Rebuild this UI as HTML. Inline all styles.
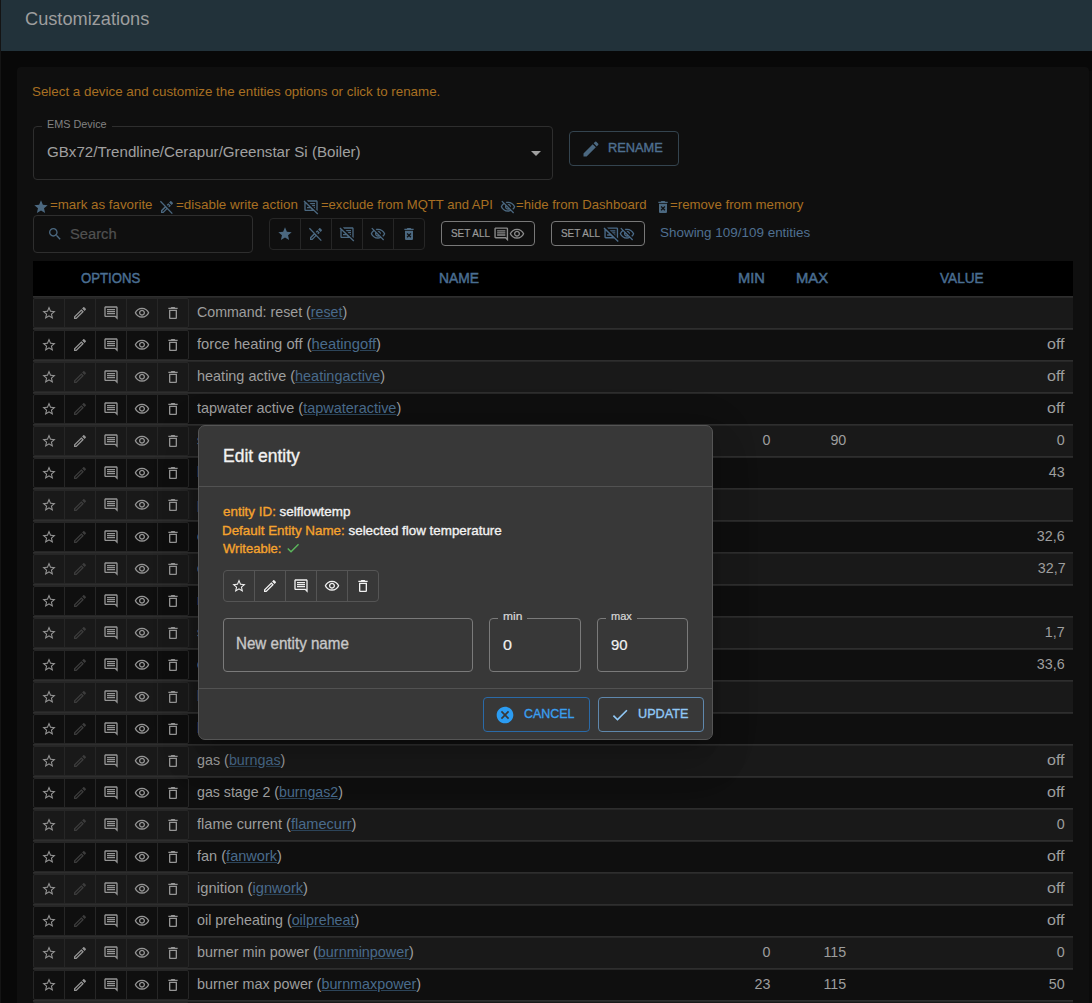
<!DOCTYPE html>
<html><head><meta charset="utf-8"><style>
*{box-sizing:border-box;margin:0;padding:0}
html,body{width:1092px;height:1003px;overflow:hidden;background:#080808;font-family:"Liberation Sans",sans-serif;}
.a{position:absolute}
.ic{position:absolute;display:block}
.t{position:absolute;white-space:nowrap;line-height:1}
</style></head><body>
<div class="a" style="left:0;top:0;width:1px;height:1003px;background:#141414"></div>
<div class="a" style="left:1px;top:0;width:1091px;height:51px;background:#22323a"></div>
<div class="a" style="left:17px;top:67px;width:1072px;height:1000px;background:#0f0f0f;border-radius:4px"></div>
<div class="a" style="left:1089px;top:71px;width:3px;height:932px;background:#0b0b0b"></div>

<div class="t" style="left:24.72px;top:10.00px;font-size:18.6px;color:#9e9e9e;font-weight:normal;transform:scaleX(0.9778);transform-origin:0 0;">Customizations</div>
<div class="t" style="left:32.17px;top:85.00px;font-size:13.0px;color:#a86f22;font-weight:normal;transform:scaleX(1.0273);transform-origin:0 0;">Select a device and customize the entities options or click to rename.</div>
<div class="a" style="left:33px;top:126px;width:520px;height:54px;border:1px solid #2e2e2e;border-radius:4px"></div>
<div class="a" style="left:42px;top:120px;width:70px;height:12px;background:#0f0f0f"></div>
<div class="t" style="left:46.96px;top:119.00px;font-size:11.5px;color:#828282;font-weight:normal;transform:scaleX(0.9419);transform-origin:0 0;">EMS Device</div>
<div class="t" style="left:47.30px;top:144.00px;font-size:15.5px;color:#a0a0a0;font-weight:normal;transform:scaleX(0.9751);transform-origin:0 0;">GBx72/Trendline/Cerapur/Greenstar Si (Boiler)</div>
<svg class="ic" style="left:523.6px;top:141px;width:24px;height:24px;" viewBox="0 0 24 24"><path fill="#a0a0a0" d="M7 10l5 5 5-5z"/></svg>
<div class="a" style="left:569px;top:131px;width:110px;height:35px;border:1px solid #34444f;border-radius:4px"></div>
<svg class="ic" style="left:580.6px;top:138.7px;width:20px;height:20px;" viewBox="0 0 24 24"><path fill="#4b6880" d="M3 17.25V21h3.75L17.81 9.94l-3.75-3.75L3 17.25zM20.71 7.04c.39-.39.39-1.02 0-1.41l-2.34-2.34a.9959.9959 0 0 0-1.41 0l-1.83 1.83 3.75 3.75 1.83-1.83z"/></svg>
<div class="t" style="left:608.43px;top:142.00px;font-size:12.0px;color:#4f7091;font-weight:normal;transform:scaleX(1.0660);transform-origin:0 0;-webkit-text-stroke:0.35px currentColor;">RENAME</div>
<svg class="ic" style="left:32.8px;top:198.5px;width:16px;height:16px;" viewBox="0 0 24 24"><path fill="#4b6880" d="M12 17.27 18.18 21l-1.64-7.03L22 9.24l-7.19-.61L12 2 9.19 8.63 2 9.24l5.46 4.73L5.82 21z"/></svg>
<div class="t" style="left:49.90px;top:199.00px;font-size:12.4px;color:#a86f22;font-weight:normal;transform:scaleX(1.0747);transform-origin:0 0;">=mark as favorite</div>
<svg class="ic" style="left:158.5px;top:198.5px;width:16px;height:16px;" viewBox="0 0 24 24"><path fill="#4b6880" d="M14.06 9.02l.92.92-1.11 1.11 1.41 1.41 2.52-2.52-3.75-3.75-2.52 2.52 1.41 1.41 1.12-1.1zm6.65-1.98c.39-.39.39-1.02 0-1.41l-2.34-2.34c-.2-.2-.45-.29-.71-.29-.26 0-.51.1-.7.29l-1.83 1.83 3.75 3.75 1.83-1.83zM2.81 2.81 1.39 4.22 8.46 11.3 3 16.75V21h3.75l5.46-5.46 7.07 7.07 1.41-1.41L2.81 2.81zM5.92 19H5v-.92l4.88-4.88.92.92L5.92 19z"/></svg>
<div class="t" style="left:175.80px;top:199.00px;font-size:12.4px;color:#a86f22;font-weight:normal;transform:scaleX(1.0821);transform-origin:0 0;">=disable write action</div>
<svg class="ic" style="left:303.3px;top:198.5px;width:16px;height:16px;" viewBox="0 0 24 24"><path fill="#4b6880" d="M21.99 4c0-1.1-.89-2-1.99-2H5.83l2 2H20v12.17l-.01.01L17.83 14H18v-2h-2.17l-1-1H18V9h-5.17l-1-1H18V6H9.83L20.99 17.17l1 1zM2.1 2.1.69 3.51 2 4.83V16c0 1.1.9 2 2 2h12.17l5.31 5.31 1.41-1.41L2.1 2.1zM4 16V6.83L9.17 12H6v2h5.17l2 2H4z"/></svg>
<div class="t" style="left:320.50px;top:199.00px;font-size:12.4px;color:#a86f22;font-weight:normal;transform:scaleX(1.0521);transform-origin:0 0;">=exclude from MQTT and API</div>
<svg class="ic" style="left:499.5px;top:198.5px;width:16px;height:16px;" viewBox="0 0 24 24"><path fill="#4b6880" d="M12 6c3.79 0 7.17 2.13 8.82 5.5-.59 1.22-1.42 2.27-2.41 3.12l1.41 1.41c1.39-1.23 2.49-2.77 3.18-4.53C21.27 7.11 17 4 12 4c-1.27 0-2.49.2-3.64.57l1.65 1.65C10.66 6.09 11.32 6 12 6zm-1.07 1.14L13 9.21c.57.25 1.03.71 1.28 1.28l2.07 2.07c.08-.34.14-.7.14-1.07C16.5 9.01 14.48 7 12 7c-.37 0-.72.05-1.07.14zM2.01 3.87l2.68 2.68C3.06 7.83 1.77 9.53 1 11.5 2.73 15.89 7 19 12 19c1.52 0 2.98-.29 4.32-.82l3.42 3.42 1.41-1.41L3.42 2.45 2.01 3.87zm7.5 7.5 2.61 2.61c-.04.01-.08.02-.12.02-1.38 0-2.5-1.12-2.5-2.5 0-.05.01-.08.01-.13zm-3.4-3.4 1.75 1.75c-.23.55-.36 1.15-.36 1.78 0 2.48 2.02 4.5 4.5 4.5.63 0 1.23-.13 1.77-.36l.98.98c-.88.24-1.8.38-2.75.38-3.79 0-7.17-2.13-8.82-5.5.7-1.43 1.72-2.61 2.93-3.53z"/></svg>
<div class="t" style="left:515.50px;top:199.00px;font-size:12.4px;color:#a86f22;font-weight:normal;transform:scaleX(1.0618);transform-origin:0 0;">=hide from Dashboard</div>
<svg class="ic" style="left:654.5px;top:198.5px;width:16px;height:16px;" viewBox="0 0 24 24"><path fill="#4b6880" d="M6 19c0 1.1.9 2 2 2h8c1.1 0 2-.9 2-2V7H6v12zm2.46-7.12 1.41-1.41L12 12.59l2.12-2.12 1.41 1.41L13.41 14l2.12 2.12-1.41 1.41L12 15.41l-2.12 2.12-1.41-1.41L10.59 14l-2.13-2.12zM15.5 4l-1-1h-5l-1 1H5v2h14V4z"/></svg>
<div class="t" style="left:670.10px;top:199.00px;font-size:12.4px;color:#a86f22;font-weight:normal;transform:scaleX(1.0672);transform-origin:0 0;">=remove from memory</div>
<div class="a" style="left:33px;top:215px;width:220px;height:38px;border:1px solid #2e2e2e;border-radius:4px"></div>
<svg class="ic" style="left:46.8px;top:225.8px;width:16px;height:16px;" viewBox="0 0 24 24"><path fill="#4b6880" d="M15.5 14h-.79l-.28-.27C15.41 12.59 16 11.11 16 9.5 16 5.91 13.09 3 9.5 3S3 5.91 3 9.5 5.91 16 9.5 16c1.61 0 3.09-.59 4.23-1.57l.27.28v.79l5 4.99L20.49 19l-4.99-5zm-6 0C7.01 14 5 11.99 5 9.5S7.01 5 9.5 5 14 7.01 14 9.5 11.99 14 9.5 14z"/></svg>
<div class="t" style="left:70.41px;top:227.00px;font-size:14.9px;color:#515151;font-weight:normal;transform:scaleX(0.9870);transform-origin:0 0;-webkit-text-stroke:0.2px currentColor;">Search</div>
<div class="a" style="left:269px;top:218px;width:156px;height:32px;border:1px solid #262626;border-radius:4px"></div>
<div class="a" style="left:300px;top:219px;width:1px;height:30px;background:#262626"></div>
<div class="a" style="left:331px;top:219px;width:1px;height:30px;background:#262626"></div>
<div class="a" style="left:362px;top:219px;width:1px;height:30px;background:#262626"></div>
<div class="a" style="left:393px;top:219px;width:1px;height:30px;background:#262626"></div>
<svg class="ic" style="left:276.5px;top:226px;width:16px;height:16px;" viewBox="0 0 24 24"><path fill="#4b6880" d="M12 17.27 18.18 21l-1.64-7.03L22 9.24l-7.19-.61L12 2 9.19 8.63 2 9.24l5.46 4.73L5.82 21z"/></svg>
<svg class="ic" style="left:307.5px;top:226px;width:16px;height:16px;" viewBox="0 0 24 24"><path fill="#4b6880" d="M14.06 9.02l.92.92-1.11 1.11 1.41 1.41 2.52-2.52-3.75-3.75-2.52 2.52 1.41 1.41 1.12-1.1zm6.65-1.98c.39-.39.39-1.02 0-1.41l-2.34-2.34c-.2-.2-.45-.29-.71-.29-.26 0-.51.1-.7.29l-1.83 1.83 3.75 3.75 1.83-1.83zM2.81 2.81 1.39 4.22 8.46 11.3 3 16.75V21h3.75l5.46-5.46 7.07 7.07 1.41-1.41L2.81 2.81zM5.92 19H5v-.92l4.88-4.88.92.92L5.92 19z"/></svg>
<svg class="ic" style="left:338.5px;top:226px;width:16px;height:16px;" viewBox="0 0 24 24"><path fill="#4b6880" d="M21.99 4c0-1.1-.89-2-1.99-2H5.83l2 2H20v12.17l-.01.01L17.83 14H18v-2h-2.17l-1-1H18V9h-5.17l-1-1H18V6H9.83L20.99 17.17l1 1zM2.1 2.1.69 3.51 2 4.83V16c0 1.1.9 2 2 2h12.17l5.31 5.31 1.41-1.41L2.1 2.1zM4 16V6.83L9.17 12H6v2h5.17l2 2H4z"/></svg>
<svg class="ic" style="left:369.5px;top:226px;width:16px;height:16px;" viewBox="0 0 24 24"><path fill="#4b6880" d="M12 6c3.79 0 7.17 2.13 8.82 5.5-.59 1.22-1.42 2.27-2.41 3.12l1.41 1.41c1.39-1.23 2.49-2.77 3.18-4.53C21.27 7.11 17 4 12 4c-1.27 0-2.49.2-3.64.57l1.65 1.65C10.66 6.09 11.32 6 12 6zm-1.07 1.14L13 9.21c.57.25 1.03.71 1.28 1.28l2.07 2.07c.08-.34.14-.7.14-1.07C16.5 9.01 14.48 7 12 7c-.37 0-.72.05-1.07.14zM2.01 3.87l2.68 2.68C3.06 7.83 1.77 9.53 1 11.5 2.73 15.89 7 19 12 19c1.52 0 2.98-.29 4.32-.82l3.42 3.42 1.41-1.41L3.42 2.45 2.01 3.87zm7.5 7.5 2.61 2.61c-.04.01-.08.02-.12.02-1.38 0-2.5-1.12-2.5-2.5 0-.05.01-.08.01-.13zm-3.4-3.4 1.75 1.75c-.23.55-.36 1.15-.36 1.78 0 2.48 2.02 4.5 4.5 4.5.63 0 1.23-.13 1.77-.36l.98.98c-.88.24-1.8.38-2.75.38-3.79 0-7.17-2.13-8.82-5.5.7-1.43 1.72-2.61 2.93-3.53z"/></svg>
<svg class="ic" style="left:400.5px;top:226px;width:16px;height:16px;" viewBox="0 0 24 24"><path fill="#4b6880" d="M6 19c0 1.1.9 2 2 2h8c1.1 0 2-.9 2-2V7H6v12zm2.46-7.12 1.41-1.41L12 12.59l2.12-2.12 1.41 1.41L13.41 14l2.12 2.12-1.41 1.41L12 15.41l-2.12 2.12-1.41-1.41L10.59 14l-2.13-2.12zM15.5 4l-1-1h-5l-1 1H5v2h14V4z"/></svg>
<div class="a" style="left:441px;top:221px;width:94px;height:25px;border:1px solid #787878;border-radius:4px"></div>
<div class="t" style="left:450.80px;top:229.00px;font-size:10.4px;color:#9a9a9a;font-weight:normal;transform:scaleX(0.9537);transform-origin:0 0;-webkit-text-stroke:0.2px currentColor;">SET ALL</div>
<svg class="ic" style="left:492.6px;top:225.9px;width:16.5px;height:16.5px;" viewBox="0 0 24 24"><path fill="#8a8a8a" d="M21.99 4c0-1.1-.89-2-1.99-2H4c-1.1 0-2 .9-2 2v12c0 1.1.9 2 2 2h14l4 4-.01-18zM20 4v13.17L18.83 16H4V4h16zM6 12h12v2H6zm0-3h12v2H6zm0-3h12v2H6z"/></svg>
<svg class="ic" style="left:509.3px;top:226px;width:16px;height:16px;" viewBox="0 0 24 24"><path fill="#8a8a8a" d="M12 6c3.79 0 7.17 2.13 8.82 5.5C19.17 14.87 15.79 17 12 17s-7.17-2.13-8.82-5.5C4.83 8.13 8.21 6 12 6m0-2C7 4 2.73 7.11 1 11.5 2.73 15.89 7 19 12 19s9.27-3.11 11-7.5C21.27 7.11 17 4 12 4zm0 5c1.38 0 2.5 1.12 2.5 2.5S13.38 14 12 14s-2.5-1.12-2.5-2.5S10.62 9 12 9m0-2c-2.48 0-4.5 2.02-4.5 4.5S9.52 16 12 16s4.5-2.02 4.5-4.5S14.48 7 12 7z"/></svg>
<div class="a" style="left:551px;top:221px;width:94px;height:25px;border:1px solid #787878;border-radius:4px"></div>
<div class="t" style="left:560.80px;top:229.00px;font-size:10.4px;color:#9a9a9a;font-weight:normal;transform:scaleX(0.9537);transform-origin:0 0;-webkit-text-stroke:0.2px currentColor;">SET ALL</div>
<svg class="ic" style="left:602.6px;top:225.9px;width:16.5px;height:16.5px;" viewBox="0 0 24 24"><path fill="#4a6a88" d="M21.99 4c0-1.1-.89-2-1.99-2H5.83l2 2H20v12.17l-.01.01L17.83 14H18v-2h-2.17l-1-1H18V9h-5.17l-1-1H18V6H9.83L20.99 17.17l1 1zM2.1 2.1.69 3.51 2 4.83V16c0 1.1.9 2 2 2h12.17l5.31 5.31 1.41-1.41L2.1 2.1zM4 16V6.83L9.17 12H6v2h5.17l2 2H4z"/></svg>
<svg class="ic" style="left:619.3px;top:226px;width:16px;height:16px;" viewBox="0 0 24 24"><path fill="#4a6a88" d="M12 6c3.79 0 7.17 2.13 8.82 5.5-.59 1.22-1.42 2.27-2.41 3.12l1.41 1.41c1.39-1.23 2.49-2.77 3.18-4.53C21.27 7.11 17 4 12 4c-1.27 0-2.49.2-3.64.57l1.65 1.65C10.66 6.09 11.32 6 12 6zm-1.07 1.14L13 9.21c.57.25 1.03.71 1.28 1.28l2.07 2.07c.08-.34.14-.7.14-1.07C16.5 9.01 14.48 7 12 7c-.37 0-.72.05-1.07.14zM2.01 3.87l2.68 2.68C3.06 7.83 1.77 9.53 1 11.5 2.73 15.89 7 19 12 19c1.52 0 2.98-.29 4.32-.82l3.42 3.42 1.41-1.41L3.42 2.45 2.01 3.87zm7.5 7.5 2.61 2.61c-.04.01-.08.02-.12.02-1.38 0-2.5-1.12-2.5-2.5 0-.05.01-.08.01-.13zm-3.4-3.4 1.75 1.75c-.23.55-.36 1.15-.36 1.78 0 2.48 2.02 4.5 4.5 4.5.63 0 1.23-.13 1.77-.36l.98.98c-.88.24-1.8.38-2.75.38-3.79 0-7.17-2.13-8.82-5.5.7-1.43 1.72-2.61 2.93-3.53z"/></svg>
<div class="t" style="left:659.90px;top:226.00px;font-size:13.5px;color:#4f7091;font-weight:normal;transform:scaleX(0.9960);transform-origin:0 0;">Showing 109/109 entities</div>
<div class="a" style="left:33px;top:261px;width:1040px;height:35px;background:#000000"></div>
<div class="t" style="left:81.10px;top:270.00px;font-size:15.5px;color:#4a6e92;font-weight:normal;transform:scaleX(0.8486);transform-origin:0 0;-webkit-text-stroke:0.5px currentColor;">OPTIONS</div>
<div class="t" style="left:439.01px;top:270.00px;font-size:15.5px;color:#4a6e92;font-weight:normal;transform:scaleX(0.8932);transform-origin:0 0;-webkit-text-stroke:0.5px currentColor;">NAME</div>
<div class="t" style="left:738.15px;top:270.00px;font-size:15.5px;color:#4a6e92;font-weight:normal;transform:scaleX(0.9481);transform-origin:0 0;-webkit-text-stroke:0.5px currentColor;">MIN</div>
<div class="t" style="left:796.34px;top:270.00px;font-size:15.5px;color:#4a6e92;font-weight:normal;transform:scaleX(0.9563);transform-origin:0 0;-webkit-text-stroke:0.5px currentColor;">MAX</div>
<div class="t" style="left:939.90px;top:270.00px;font-size:15.5px;color:#4a6e92;font-weight:normal;transform:scaleX(0.8796);transform-origin:0 0;-webkit-text-stroke:0.5px currentColor;">VALUE</div>
<div class="a" style="left:33px;top:296px;width:1040px;height:1px;background:#2e2e2e"></div>
<div class="a" style="left:33px;top:297px;width:1040px;height:1px;background:#272727"></div>
<div class="a" style="left:33px;top:298px;width:1040px;height:30px;background:#191919"></div>
<div class="a" style="left:33px;top:298px;width:156px;height:30px;border:1px solid #262626;border-radius:2px"></div>
<div class="a" style="left:64px;top:298px;width:1px;height:30px;background:#262626"></div>
<div class="a" style="left:95px;top:298px;width:1px;height:30px;background:#262626"></div>
<div class="a" style="left:126px;top:298px;width:1px;height:30px;background:#262626"></div>
<div class="a" style="left:157px;top:298px;width:1px;height:30px;background:#262626"></div>
<svg class="ic" style="left:40.5px;top:305px;width:16px;height:16px;" viewBox="0 0 24 24"><path fill="#959595" d="M22 9.24l-7.19-.62L12 2 9.19 8.63 2 9.24l5.46 4.73L5.82 21 12 17.27 18.18 21l-1.63-7.03L22 9.24zM12 15.4l-3.76 2.27 1-4.28-3.32-2.88 4.38-.38L12 6.1l1.71 4.04 4.38.38-3.32 2.88 1 4.28L12 15.4z"/></svg>
<svg class="ic" style="left:71.5px;top:305px;width:16px;height:16px;" viewBox="0 0 24 24"><path fill="#959595" d="M3 17.25V21h3.75L17.81 9.94l-3.75-3.75L3 17.25zM5.92 19H5v-.92l9.06-9.06.92.92L5.92 19zM20.71 5.63l-2.34-2.34c-.2-.2-.45-.29-.71-.29s-.51.1-.7.29l-1.83 1.83 3.75 3.75 1.83-1.83c.39-.39.39-1.02 0-1.41z"/></svg>
<svg class="ic" style="left:102.5px;top:305px;width:16px;height:16px;" viewBox="0 0 24 24"><path fill="#959595" d="M21.99 4c0-1.1-.89-2-1.99-2H4c-1.1 0-2 .9-2 2v12c0 1.1.9 2 2 2h14l4 4-.01-18zM20 4v13.17L18.83 16H4V4h16zM6 12h12v2H6zm0-3h12v2H6zm0-3h12v2H6z"/></svg>
<svg class="ic" style="left:133.5px;top:305px;width:16px;height:16px;" viewBox="0 0 24 24"><path fill="#959595" d="M12 6c3.79 0 7.17 2.13 8.82 5.5C19.17 14.87 15.79 17 12 17s-7.17-2.13-8.82-5.5C4.83 8.13 8.21 6 12 6m0-2C7 4 2.73 7.11 1 11.5 2.73 15.89 7 19 12 19s9.27-3.11 11-7.5C21.27 7.11 17 4 12 4zm0 5c1.38 0 2.5 1.12 2.5 2.5S13.38 14 12 14s-2.5-1.12-2.5-2.5S10.62 9 12 9m0-2c-2.48 0-4.5 2.02-4.5 4.5S9.52 16 12 16s4.5-2.02 4.5-4.5S14.48 7 12 7z"/></svg>
<svg class="ic" style="left:164.5px;top:305px;width:16px;height:16px;" viewBox="0 0 24 24"><path fill="#959595" d="M6 19c0 1.1.9 2 2 2h8c1.1 0 2-.9 2-2V7H6v12zM8 9h8v10H8V9zm7.5-5-1-1h-5l-1 1H5v2h14V4z"/></svg>
<div class="t" style="left:197.10px;top:305.00px;font-size:14.3px;color:#9e9e9e;font-weight:normal;transform:scaleX(0.9947);transform-origin:0 0;">Command: reset (<span style="color:#496b8c;text-decoration:underline;text-decoration-color:#2c4459;text-underline-offset:1px">reset</span>)</div>
<div class="a" style="left:33px;top:328px;width:1040px;height:1px;background:#2e2e2e"></div>
<div class="a" style="left:33px;top:329px;width:1040px;height:1px;background:#272727"></div>
<div class="a" style="left:33px;top:330px;width:1040px;height:30px;background:#0f0f0f"></div>
<div class="a" style="left:33px;top:330px;width:156px;height:30px;border:1px solid #262626;border-radius:2px"></div>
<div class="a" style="left:64px;top:330px;width:1px;height:30px;background:#262626"></div>
<div class="a" style="left:95px;top:330px;width:1px;height:30px;background:#262626"></div>
<div class="a" style="left:126px;top:330px;width:1px;height:30px;background:#262626"></div>
<div class="a" style="left:157px;top:330px;width:1px;height:30px;background:#262626"></div>
<svg class="ic" style="left:40.5px;top:337px;width:16px;height:16px;" viewBox="0 0 24 24"><path fill="#959595" d="M22 9.24l-7.19-.62L12 2 9.19 8.63 2 9.24l5.46 4.73L5.82 21 12 17.27 18.18 21l-1.63-7.03L22 9.24zM12 15.4l-3.76 2.27 1-4.28-3.32-2.88 4.38-.38L12 6.1l1.71 4.04 4.38.38-3.32 2.88 1 4.28L12 15.4z"/></svg>
<svg class="ic" style="left:71.5px;top:337px;width:16px;height:16px;" viewBox="0 0 24 24"><path fill="#959595" d="M3 17.25V21h3.75L17.81 9.94l-3.75-3.75L3 17.25zM5.92 19H5v-.92l9.06-9.06.92.92L5.92 19zM20.71 5.63l-2.34-2.34c-.2-.2-.45-.29-.71-.29s-.51.1-.7.29l-1.83 1.83 3.75 3.75 1.83-1.83c.39-.39.39-1.02 0-1.41z"/></svg>
<svg class="ic" style="left:102.5px;top:337px;width:16px;height:16px;" viewBox="0 0 24 24"><path fill="#959595" d="M21.99 4c0-1.1-.89-2-1.99-2H4c-1.1 0-2 .9-2 2v12c0 1.1.9 2 2 2h14l4 4-.01-18zM20 4v13.17L18.83 16H4V4h16zM6 12h12v2H6zm0-3h12v2H6zm0-3h12v2H6z"/></svg>
<svg class="ic" style="left:133.5px;top:337px;width:16px;height:16px;" viewBox="0 0 24 24"><path fill="#959595" d="M12 6c3.79 0 7.17 2.13 8.82 5.5C19.17 14.87 15.79 17 12 17s-7.17-2.13-8.82-5.5C4.83 8.13 8.21 6 12 6m0-2C7 4 2.73 7.11 1 11.5 2.73 15.89 7 19 12 19s9.27-3.11 11-7.5C21.27 7.11 17 4 12 4zm0 5c1.38 0 2.5 1.12 2.5 2.5S13.38 14 12 14s-2.5-1.12-2.5-2.5S10.62 9 12 9m0-2c-2.48 0-4.5 2.02-4.5 4.5S9.52 16 12 16s4.5-2.02 4.5-4.5S14.48 7 12 7z"/></svg>
<svg class="ic" style="left:164.5px;top:337px;width:16px;height:16px;" viewBox="0 0 24 24"><path fill="#959595" d="M6 19c0 1.1.9 2 2 2h8c1.1 0 2-.9 2-2V7H6v12zM8 9h8v10H8V9zm7.5-5-1-1h-5l-1 1H5v2h14V4z"/></svg>
<div class="t" style="left:197.10px;top:337.00px;font-size:14.3px;color:#9e9e9e;font-weight:normal;transform:scaleX(1.0320);transform-origin:0 0;">force heating off (<span style="color:#496b8c;text-decoration:underline;text-decoration-color:#2c4459;text-underline-offset:1px">heatingoff</span>)</div>
<div class="t" style="left:1046.80px;top:337.00px;font-size:14.3px;color:#9e9e9e;font-weight:normal;transform:scaleX(1.1250);transform-origin:0 0;">off</div>
<div class="a" style="left:33px;top:360px;width:1040px;height:1px;background:#2e2e2e"></div>
<div class="a" style="left:33px;top:361px;width:1040px;height:1px;background:#272727"></div>
<div class="a" style="left:33px;top:362px;width:1040px;height:30px;background:#191919"></div>
<div class="a" style="left:33px;top:362px;width:156px;height:30px;border:1px solid #262626;border-radius:2px"></div>
<div class="a" style="left:64px;top:362px;width:1px;height:30px;background:#262626"></div>
<div class="a" style="left:95px;top:362px;width:1px;height:30px;background:#262626"></div>
<div class="a" style="left:126px;top:362px;width:1px;height:30px;background:#262626"></div>
<div class="a" style="left:157px;top:362px;width:1px;height:30px;background:#262626"></div>
<svg class="ic" style="left:40.5px;top:369px;width:16px;height:16px;" viewBox="0 0 24 24"><path fill="#959595" d="M22 9.24l-7.19-.62L12 2 9.19 8.63 2 9.24l5.46 4.73L5.82 21 12 17.27 18.18 21l-1.63-7.03L22 9.24zM12 15.4l-3.76 2.27 1-4.28-3.32-2.88 4.38-.38L12 6.1l1.71 4.04 4.38.38-3.32 2.88 1 4.28L12 15.4z"/></svg>
<svg class="ic" style="left:71.5px;top:369px;width:16px;height:16px;" viewBox="0 0 24 24"><path fill="#3c3c3c" d="M3 17.25V21h3.75L17.81 9.94l-3.75-3.75L3 17.25zM5.92 19H5v-.92l9.06-9.06.92.92L5.92 19zM20.71 5.63l-2.34-2.34c-.2-.2-.45-.29-.71-.29s-.51.1-.7.29l-1.83 1.83 3.75 3.75 1.83-1.83c.39-.39.39-1.02 0-1.41z"/></svg>
<svg class="ic" style="left:102.5px;top:369px;width:16px;height:16px;" viewBox="0 0 24 24"><path fill="#959595" d="M21.99 4c0-1.1-.89-2-1.99-2H4c-1.1 0-2 .9-2 2v12c0 1.1.9 2 2 2h14l4 4-.01-18zM20 4v13.17L18.83 16H4V4h16zM6 12h12v2H6zm0-3h12v2H6zm0-3h12v2H6z"/></svg>
<svg class="ic" style="left:133.5px;top:369px;width:16px;height:16px;" viewBox="0 0 24 24"><path fill="#959595" d="M12 6c3.79 0 7.17 2.13 8.82 5.5C19.17 14.87 15.79 17 12 17s-7.17-2.13-8.82-5.5C4.83 8.13 8.21 6 12 6m0-2C7 4 2.73 7.11 1 11.5 2.73 15.89 7 19 12 19s9.27-3.11 11-7.5C21.27 7.11 17 4 12 4zm0 5c1.38 0 2.5 1.12 2.5 2.5S13.38 14 12 14s-2.5-1.12-2.5-2.5S10.62 9 12 9m0-2c-2.48 0-4.5 2.02-4.5 4.5S9.52 16 12 16s4.5-2.02 4.5-4.5S14.48 7 12 7z"/></svg>
<svg class="ic" style="left:164.5px;top:369px;width:16px;height:16px;" viewBox="0 0 24 24"><path fill="#959595" d="M6 19c0 1.1.9 2 2 2h8c1.1 0 2-.9 2-2V7H6v12zM8 9h8v10H8V9zm7.5-5-1-1h-5l-1 1H5v2h14V4z"/></svg>
<div class="t" style="left:196.70px;top:369.00px;font-size:14.3px;color:#9e9e9e;font-weight:normal;transform:scaleX(1.0108);transform-origin:0 0;">heating active (<span style="color:#496b8c;text-decoration:underline;text-decoration-color:#2c4459;text-underline-offset:1px">heatingactive</span>)</div>
<div class="t" style="left:1046.80px;top:369.00px;font-size:14.3px;color:#9e9e9e;font-weight:normal;transform:scaleX(1.1250);transform-origin:0 0;">off</div>
<div class="a" style="left:33px;top:392px;width:1040px;height:1px;background:#2e2e2e"></div>
<div class="a" style="left:33px;top:393px;width:1040px;height:1px;background:#272727"></div>
<div class="a" style="left:33px;top:394px;width:1040px;height:30px;background:#0f0f0f"></div>
<div class="a" style="left:33px;top:394px;width:156px;height:30px;border:1px solid #262626;border-radius:2px"></div>
<div class="a" style="left:64px;top:394px;width:1px;height:30px;background:#262626"></div>
<div class="a" style="left:95px;top:394px;width:1px;height:30px;background:#262626"></div>
<div class="a" style="left:126px;top:394px;width:1px;height:30px;background:#262626"></div>
<div class="a" style="left:157px;top:394px;width:1px;height:30px;background:#262626"></div>
<svg class="ic" style="left:40.5px;top:401px;width:16px;height:16px;" viewBox="0 0 24 24"><path fill="#959595" d="M22 9.24l-7.19-.62L12 2 9.19 8.63 2 9.24l5.46 4.73L5.82 21 12 17.27 18.18 21l-1.63-7.03L22 9.24zM12 15.4l-3.76 2.27 1-4.28-3.32-2.88 4.38-.38L12 6.1l1.71 4.04 4.38.38-3.32 2.88 1 4.28L12 15.4z"/></svg>
<svg class="ic" style="left:71.5px;top:401px;width:16px;height:16px;" viewBox="0 0 24 24"><path fill="#3c3c3c" d="M3 17.25V21h3.75L17.81 9.94l-3.75-3.75L3 17.25zM5.92 19H5v-.92l9.06-9.06.92.92L5.92 19zM20.71 5.63l-2.34-2.34c-.2-.2-.45-.29-.71-.29s-.51.1-.7.29l-1.83 1.83 3.75 3.75 1.83-1.83c.39-.39.39-1.02 0-1.41z"/></svg>
<svg class="ic" style="left:102.5px;top:401px;width:16px;height:16px;" viewBox="0 0 24 24"><path fill="#959595" d="M21.99 4c0-1.1-.89-2-1.99-2H4c-1.1 0-2 .9-2 2v12c0 1.1.9 2 2 2h14l4 4-.01-18zM20 4v13.17L18.83 16H4V4h16zM6 12h12v2H6zm0-3h12v2H6zm0-3h12v2H6z"/></svg>
<svg class="ic" style="left:133.5px;top:401px;width:16px;height:16px;" viewBox="0 0 24 24"><path fill="#959595" d="M12 6c3.79 0 7.17 2.13 8.82 5.5C19.17 14.87 15.79 17 12 17s-7.17-2.13-8.82-5.5C4.83 8.13 8.21 6 12 6m0-2C7 4 2.73 7.11 1 11.5 2.73 15.89 7 19 12 19s9.27-3.11 11-7.5C21.27 7.11 17 4 12 4zm0 5c1.38 0 2.5 1.12 2.5 2.5S13.38 14 12 14s-2.5-1.12-2.5-2.5S10.62 9 12 9m0-2c-2.48 0-4.5 2.02-4.5 4.5S9.52 16 12 16s4.5-2.02 4.5-4.5S14.48 7 12 7z"/></svg>
<svg class="ic" style="left:164.5px;top:401px;width:16px;height:16px;" viewBox="0 0 24 24"><path fill="#959595" d="M6 19c0 1.1.9 2 2 2h8c1.1 0 2-.9 2-2V7H6v12zM8 9h8v10H8V9zm7.5-5-1-1h-5l-1 1H5v2h14V4z"/></svg>
<div class="t" style="left:197.10px;top:401.00px;font-size:14.3px;color:#9e9e9e;font-weight:normal;transform:scaleX(1.0119);transform-origin:0 0;">tapwater active (<span style="color:#496b8c;text-decoration:underline;text-decoration-color:#2c4459;text-underline-offset:1px">tapwateractive</span>)</div>
<div class="t" style="left:1046.80px;top:401.00px;font-size:14.3px;color:#9e9e9e;font-weight:normal;transform:scaleX(1.1250);transform-origin:0 0;">off</div>
<div class="a" style="left:33px;top:424px;width:1040px;height:1px;background:#2e2e2e"></div>
<div class="a" style="left:33px;top:425px;width:1040px;height:1px;background:#272727"></div>
<div class="a" style="left:33px;top:426px;width:1040px;height:30px;background:#191919"></div>
<div class="a" style="left:33px;top:426px;width:156px;height:30px;border:1px solid #262626;border-radius:2px"></div>
<div class="a" style="left:64px;top:426px;width:1px;height:30px;background:#262626"></div>
<div class="a" style="left:95px;top:426px;width:1px;height:30px;background:#262626"></div>
<div class="a" style="left:126px;top:426px;width:1px;height:30px;background:#262626"></div>
<div class="a" style="left:157px;top:426px;width:1px;height:30px;background:#262626"></div>
<svg class="ic" style="left:40.5px;top:433px;width:16px;height:16px;" viewBox="0 0 24 24"><path fill="#959595" d="M22 9.24l-7.19-.62L12 2 9.19 8.63 2 9.24l5.46 4.73L5.82 21 12 17.27 18.18 21l-1.63-7.03L22 9.24zM12 15.4l-3.76 2.27 1-4.28-3.32-2.88 4.38-.38L12 6.1l1.71 4.04 4.38.38-3.32 2.88 1 4.28L12 15.4z"/></svg>
<svg class="ic" style="left:71.5px;top:433px;width:16px;height:16px;" viewBox="0 0 24 24"><path fill="#959595" d="M3 17.25V21h3.75L17.81 9.94l-3.75-3.75L3 17.25zM5.92 19H5v-.92l9.06-9.06.92.92L5.92 19zM20.71 5.63l-2.34-2.34c-.2-.2-.45-.29-.71-.29s-.51.1-.7.29l-1.83 1.83 3.75 3.75 1.83-1.83c.39-.39.39-1.02 0-1.41z"/></svg>
<svg class="ic" style="left:102.5px;top:433px;width:16px;height:16px;" viewBox="0 0 24 24"><path fill="#959595" d="M21.99 4c0-1.1-.89-2-1.99-2H4c-1.1 0-2 .9-2 2v12c0 1.1.9 2 2 2h14l4 4-.01-18zM20 4v13.17L18.83 16H4V4h16zM6 12h12v2H6zm0-3h12v2H6zm0-3h12v2H6z"/></svg>
<svg class="ic" style="left:133.5px;top:433px;width:16px;height:16px;" viewBox="0 0 24 24"><path fill="#959595" d="M12 6c3.79 0 7.17 2.13 8.82 5.5C19.17 14.87 15.79 17 12 17s-7.17-2.13-8.82-5.5C4.83 8.13 8.21 6 12 6m0-2C7 4 2.73 7.11 1 11.5 2.73 15.89 7 19 12 19s9.27-3.11 11-7.5C21.27 7.11 17 4 12 4zm0 5c1.38 0 2.5 1.12 2.5 2.5S13.38 14 12 14s-2.5-1.12-2.5-2.5S10.62 9 12 9m0-2c-2.48 0-4.5 2.02-4.5 4.5S9.52 16 12 16s4.5-2.02 4.5-4.5S14.48 7 12 7z"/></svg>
<svg class="ic" style="left:164.5px;top:433px;width:16px;height:16px;" viewBox="0 0 24 24"><path fill="#959595" d="M6 19c0 1.1.9 2 2 2h8c1.1 0 2-.9 2-2V7H6v12zM8 9h8v10H8V9zm7.5-5-1-1h-5l-1 1H5v2h14V4z"/></svg>
<div class="t" style="left:197.10px;top:433.00px;font-size:14.3px;color:#9e9e9e;font-weight:normal;transform:scaleX(0.9900);transform-origin:0 0;">selected flow temperature (<span style="color:#496b8c;text-decoration:underline;text-decoration-color:#2c4459;text-underline-offset:1px">selflowtemp</span>)</div>
<div class="t" style="left:762.50px;top:433.00px;font-size:14.3px;color:#9e9e9e;font-weight:normal;">0</div>
<div class="t" style="left:830.40px;top:433.00px;font-size:14.3px;color:#9e9e9e;font-weight:normal;">90</div>
<div class="t" style="left:1056.80px;top:433.00px;font-size:14.3px;color:#9e9e9e;font-weight:normal;">0</div>
<div class="a" style="left:33px;top:456px;width:1040px;height:1px;background:#2e2e2e"></div>
<div class="a" style="left:33px;top:457px;width:1040px;height:1px;background:#272727"></div>
<div class="a" style="left:33px;top:458px;width:1040px;height:30px;background:#0f0f0f"></div>
<div class="a" style="left:33px;top:458px;width:156px;height:30px;border:1px solid #262626;border-radius:2px"></div>
<div class="a" style="left:64px;top:458px;width:1px;height:30px;background:#262626"></div>
<div class="a" style="left:95px;top:458px;width:1px;height:30px;background:#262626"></div>
<div class="a" style="left:126px;top:458px;width:1px;height:30px;background:#262626"></div>
<div class="a" style="left:157px;top:458px;width:1px;height:30px;background:#262626"></div>
<svg class="ic" style="left:40.5px;top:465px;width:16px;height:16px;" viewBox="0 0 24 24"><path fill="#959595" d="M22 9.24l-7.19-.62L12 2 9.19 8.63 2 9.24l5.46 4.73L5.82 21 12 17.27 18.18 21l-1.63-7.03L22 9.24zM12 15.4l-3.76 2.27 1-4.28-3.32-2.88 4.38-.38L12 6.1l1.71 4.04 4.38.38-3.32 2.88 1 4.28L12 15.4z"/></svg>
<svg class="ic" style="left:71.5px;top:465px;width:16px;height:16px;" viewBox="0 0 24 24"><path fill="#3c3c3c" d="M3 17.25V21h3.75L17.81 9.94l-3.75-3.75L3 17.25zM5.92 19H5v-.92l9.06-9.06.92.92L5.92 19zM20.71 5.63l-2.34-2.34c-.2-.2-.45-.29-.71-.29s-.51.1-.7.29l-1.83 1.83 3.75 3.75 1.83-1.83c.39-.39.39-1.02 0-1.41z"/></svg>
<svg class="ic" style="left:102.5px;top:465px;width:16px;height:16px;" viewBox="0 0 24 24"><path fill="#959595" d="M21.99 4c0-1.1-.89-2-1.99-2H4c-1.1 0-2 .9-2 2v12c0 1.1.9 2 2 2h14l4 4-.01-18zM20 4v13.17L18.83 16H4V4h16zM6 12h12v2H6zm0-3h12v2H6zm0-3h12v2H6z"/></svg>
<svg class="ic" style="left:133.5px;top:465px;width:16px;height:16px;" viewBox="0 0 24 24"><path fill="#959595" d="M12 6c3.79 0 7.17 2.13 8.82 5.5C19.17 14.87 15.79 17 12 17s-7.17-2.13-8.82-5.5C4.83 8.13 8.21 6 12 6m0-2C7 4 2.73 7.11 1 11.5 2.73 15.89 7 19 12 19s9.27-3.11 11-7.5C21.27 7.11 17 4 12 4zm0 5c1.38 0 2.5 1.12 2.5 2.5S13.38 14 12 14s-2.5-1.12-2.5-2.5S10.62 9 12 9m0-2c-2.48 0-4.5 2.02-4.5 4.5S9.52 16 12 16s4.5-2.02 4.5-4.5S14.48 7 12 7z"/></svg>
<svg class="ic" style="left:164.5px;top:465px;width:16px;height:16px;" viewBox="0 0 24 24"><path fill="#959595" d="M6 19c0 1.1.9 2 2 2h8c1.1 0 2-.9 2-2V7H6v12zM8 9h8v10H8V9zm7.5-5-1-1h-5l-1 1H5v2h14V4z"/></svg>
<div class="t" style="left:196.70px;top:465.00px;font-size:14.3px;color:#9e9e9e;font-weight:normal;transform:scaleX(0.9900);transform-origin:0 0;">burner selected max power (<span style="color:#496b8c;text-decoration:underline;text-decoration-color:#2c4459;text-underline-offset:1px">selburnpow</span>)</div>
<div class="t" style="left:1048.80px;top:465.00px;font-size:14.3px;color:#9e9e9e;font-weight:normal;">43</div>
<div class="a" style="left:33px;top:488px;width:1040px;height:1px;background:#2e2e2e"></div>
<div class="a" style="left:33px;top:489px;width:1040px;height:1px;background:#272727"></div>
<div class="a" style="left:33px;top:490px;width:1040px;height:30px;background:#191919"></div>
<div class="a" style="left:33px;top:490px;width:156px;height:30px;border:1px solid #262626;border-radius:2px"></div>
<div class="a" style="left:64px;top:490px;width:1px;height:30px;background:#262626"></div>
<div class="a" style="left:95px;top:490px;width:1px;height:30px;background:#262626"></div>
<div class="a" style="left:126px;top:490px;width:1px;height:30px;background:#262626"></div>
<div class="a" style="left:157px;top:490px;width:1px;height:30px;background:#262626"></div>
<svg class="ic" style="left:40.5px;top:497px;width:16px;height:16px;" viewBox="0 0 24 24"><path fill="#959595" d="M22 9.24l-7.19-.62L12 2 9.19 8.63 2 9.24l5.46 4.73L5.82 21 12 17.27 18.18 21l-1.63-7.03L22 9.24zM12 15.4l-3.76 2.27 1-4.28-3.32-2.88 4.38-.38L12 6.1l1.71 4.04 4.38.38-3.32 2.88 1 4.28L12 15.4z"/></svg>
<svg class="ic" style="left:71.5px;top:497px;width:16px;height:16px;" viewBox="0 0 24 24"><path fill="#3c3c3c" d="M3 17.25V21h3.75L17.81 9.94l-3.75-3.75L3 17.25zM5.92 19H5v-.92l9.06-9.06.92.92L5.92 19zM20.71 5.63l-2.34-2.34c-.2-.2-.45-.29-.71-.29s-.51.1-.7.29l-1.83 1.83 3.75 3.75 1.83-1.83c.39-.39.39-1.02 0-1.41z"/></svg>
<svg class="ic" style="left:102.5px;top:497px;width:16px;height:16px;" viewBox="0 0 24 24"><path fill="#959595" d="M21.99 4c0-1.1-.89-2-1.99-2H4c-1.1 0-2 .9-2 2v12c0 1.1.9 2 2 2h14l4 4-.01-18zM20 4v13.17L18.83 16H4V4h16zM6 12h12v2H6zm0-3h12v2H6zm0-3h12v2H6z"/></svg>
<svg class="ic" style="left:133.5px;top:497px;width:16px;height:16px;" viewBox="0 0 24 24"><path fill="#959595" d="M12 6c3.79 0 7.17 2.13 8.82 5.5C19.17 14.87 15.79 17 12 17s-7.17-2.13-8.82-5.5C4.83 8.13 8.21 6 12 6m0-2C7 4 2.73 7.11 1 11.5 2.73 15.89 7 19 12 19s9.27-3.11 11-7.5C21.27 7.11 17 4 12 4zm0 5c1.38 0 2.5 1.12 2.5 2.5S13.38 14 12 14s-2.5-1.12-2.5-2.5S10.62 9 12 9m0-2c-2.48 0-4.5 2.02-4.5 4.5S9.52 16 12 16s4.5-2.02 4.5-4.5S14.48 7 12 7z"/></svg>
<svg class="ic" style="left:164.5px;top:497px;width:16px;height:16px;" viewBox="0 0 24 24"><path fill="#959595" d="M6 19c0 1.1.9 2 2 2h8c1.1 0 2-.9 2-2V7H6v12zM8 9h8v10H8V9zm7.5-5-1-1h-5l-1 1H5v2h14V4z"/></svg>
<div class="t" style="left:196.70px;top:497.00px;font-size:14.3px;color:#9e9e9e;font-weight:normal;transform:scaleX(0.9900);transform-origin:0 0;">pump modulation (<span style="color:#496b8c;text-decoration:underline;text-decoration-color:#2c4459;text-underline-offset:1px">heatingpumpmod</span>)</div>
<div class="a" style="left:33px;top:520px;width:1040px;height:1px;background:#2e2e2e"></div>
<div class="a" style="left:33px;top:521px;width:1040px;height:1px;background:#272727"></div>
<div class="a" style="left:33px;top:522px;width:1040px;height:30px;background:#0f0f0f"></div>
<div class="a" style="left:33px;top:522px;width:156px;height:30px;border:1px solid #262626;border-radius:2px"></div>
<div class="a" style="left:64px;top:522px;width:1px;height:30px;background:#262626"></div>
<div class="a" style="left:95px;top:522px;width:1px;height:30px;background:#262626"></div>
<div class="a" style="left:126px;top:522px;width:1px;height:30px;background:#262626"></div>
<div class="a" style="left:157px;top:522px;width:1px;height:30px;background:#262626"></div>
<svg class="ic" style="left:40.5px;top:529px;width:16px;height:16px;" viewBox="0 0 24 24"><path fill="#959595" d="M22 9.24l-7.19-.62L12 2 9.19 8.63 2 9.24l5.46 4.73L5.82 21 12 17.27 18.18 21l-1.63-7.03L22 9.24zM12 15.4l-3.76 2.27 1-4.28-3.32-2.88 4.38-.38L12 6.1l1.71 4.04 4.38.38-3.32 2.88 1 4.28L12 15.4z"/></svg>
<svg class="ic" style="left:71.5px;top:529px;width:16px;height:16px;" viewBox="0 0 24 24"><path fill="#3c3c3c" d="M3 17.25V21h3.75L17.81 9.94l-3.75-3.75L3 17.25zM5.92 19H5v-.92l9.06-9.06.92.92L5.92 19zM20.71 5.63l-2.34-2.34c-.2-.2-.45-.29-.71-.29s-.51.1-.7.29l-1.83 1.83 3.75 3.75 1.83-1.83c.39-.39.39-1.02 0-1.41z"/></svg>
<svg class="ic" style="left:102.5px;top:529px;width:16px;height:16px;" viewBox="0 0 24 24"><path fill="#959595" d="M21.99 4c0-1.1-.89-2-1.99-2H4c-1.1 0-2 .9-2 2v12c0 1.1.9 2 2 2h14l4 4-.01-18zM20 4v13.17L18.83 16H4V4h16zM6 12h12v2H6zm0-3h12v2H6zm0-3h12v2H6z"/></svg>
<svg class="ic" style="left:133.5px;top:529px;width:16px;height:16px;" viewBox="0 0 24 24"><path fill="#959595" d="M12 6c3.79 0 7.17 2.13 8.82 5.5C19.17 14.87 15.79 17 12 17s-7.17-2.13-8.82-5.5C4.83 8.13 8.21 6 12 6m0-2C7 4 2.73 7.11 1 11.5 2.73 15.89 7 19 12 19s9.27-3.11 11-7.5C21.27 7.11 17 4 12 4zm0 5c1.38 0 2.5 1.12 2.5 2.5S13.38 14 12 14s-2.5-1.12-2.5-2.5S10.62 9 12 9m0-2c-2.48 0-4.5 2.02-4.5 4.5S9.52 16 12 16s4.5-2.02 4.5-4.5S14.48 7 12 7z"/></svg>
<svg class="ic" style="left:164.5px;top:529px;width:16px;height:16px;" viewBox="0 0 24 24"><path fill="#959595" d="M6 19c0 1.1.9 2 2 2h8c1.1 0 2-.9 2-2V7H6v12zM8 9h8v10H8V9zm7.5-5-1-1h-5l-1 1H5v2h14V4z"/></svg>
<div class="t" style="left:197.10px;top:529.00px;font-size:14.3px;color:#9e9e9e;font-weight:normal;transform:scaleX(0.9900);transform-origin:0 0;">outside temperature (<span style="color:#496b8c;text-decoration:underline;text-decoration-color:#2c4459;text-underline-offset:1px">outdoortemp</span>)</div>
<div class="t" style="left:1036.80px;top:529.00px;font-size:14.3px;color:#9e9e9e;font-weight:normal;">32,6</div>
<div class="a" style="left:33px;top:552px;width:1040px;height:1px;background:#2e2e2e"></div>
<div class="a" style="left:33px;top:553px;width:1040px;height:1px;background:#272727"></div>
<div class="a" style="left:33px;top:554px;width:1040px;height:30px;background:#191919"></div>
<div class="a" style="left:33px;top:554px;width:156px;height:30px;border:1px solid #262626;border-radius:2px"></div>
<div class="a" style="left:64px;top:554px;width:1px;height:30px;background:#262626"></div>
<div class="a" style="left:95px;top:554px;width:1px;height:30px;background:#262626"></div>
<div class="a" style="left:126px;top:554px;width:1px;height:30px;background:#262626"></div>
<div class="a" style="left:157px;top:554px;width:1px;height:30px;background:#262626"></div>
<svg class="ic" style="left:40.5px;top:561px;width:16px;height:16px;" viewBox="0 0 24 24"><path fill="#959595" d="M22 9.24l-7.19-.62L12 2 9.19 8.63 2 9.24l5.46 4.73L5.82 21 12 17.27 18.18 21l-1.63-7.03L22 9.24zM12 15.4l-3.76 2.27 1-4.28-3.32-2.88 4.38-.38L12 6.1l1.71 4.04 4.38.38-3.32 2.88 1 4.28L12 15.4z"/></svg>
<svg class="ic" style="left:71.5px;top:561px;width:16px;height:16px;" viewBox="0 0 24 24"><path fill="#3c3c3c" d="M3 17.25V21h3.75L17.81 9.94l-3.75-3.75L3 17.25zM5.92 19H5v-.92l9.06-9.06.92.92L5.92 19zM20.71 5.63l-2.34-2.34c-.2-.2-.45-.29-.71-.29s-.51.1-.7.29l-1.83 1.83 3.75 3.75 1.83-1.83c.39-.39.39-1.02 0-1.41z"/></svg>
<svg class="ic" style="left:102.5px;top:561px;width:16px;height:16px;" viewBox="0 0 24 24"><path fill="#959595" d="M21.99 4c0-1.1-.89-2-1.99-2H4c-1.1 0-2 .9-2 2v12c0 1.1.9 2 2 2h14l4 4-.01-18zM20 4v13.17L18.83 16H4V4h16zM6 12h12v2H6zm0-3h12v2H6zm0-3h12v2H6z"/></svg>
<svg class="ic" style="left:133.5px;top:561px;width:16px;height:16px;" viewBox="0 0 24 24"><path fill="#959595" d="M12 6c3.79 0 7.17 2.13 8.82 5.5C19.17 14.87 15.79 17 12 17s-7.17-2.13-8.82-5.5C4.83 8.13 8.21 6 12 6m0-2C7 4 2.73 7.11 1 11.5 2.73 15.89 7 19 12 19s9.27-3.11 11-7.5C21.27 7.11 17 4 12 4zm0 5c1.38 0 2.5 1.12 2.5 2.5S13.38 14 12 14s-2.5-1.12-2.5-2.5S10.62 9 12 9m0-2c-2.48 0-4.5 2.02-4.5 4.5S9.52 16 12 16s4.5-2.02 4.5-4.5S14.48 7 12 7z"/></svg>
<svg class="ic" style="left:164.5px;top:561px;width:16px;height:16px;" viewBox="0 0 24 24"><path fill="#959595" d="M6 19c0 1.1.9 2 2 2h8c1.1 0 2-.9 2-2V7H6v12zM8 9h8v10H8V9zm7.5-5-1-1h-5l-1 1H5v2h14V4z"/></svg>
<div class="t" style="left:197.10px;top:561.00px;font-size:14.3px;color:#9e9e9e;font-weight:normal;transform:scaleX(0.9900);transform-origin:0 0;">current flow temperature (<span style="color:#496b8c;text-decoration:underline;text-decoration-color:#2c4459;text-underline-offset:1px">curflowtemp</span>)</div>
<div class="t" style="left:1037.80px;top:561.00px;font-size:14.3px;color:#9e9e9e;font-weight:normal;">32,7</div>
<div class="a" style="left:33px;top:584px;width:1040px;height:1px;background:#2e2e2e"></div>
<div class="a" style="left:33px;top:585px;width:1040px;height:1px;background:#272727"></div>
<div class="a" style="left:33px;top:586px;width:1040px;height:30px;background:#0f0f0f"></div>
<div class="a" style="left:33px;top:586px;width:156px;height:30px;border:1px solid #262626;border-radius:2px"></div>
<div class="a" style="left:64px;top:586px;width:1px;height:30px;background:#262626"></div>
<div class="a" style="left:95px;top:586px;width:1px;height:30px;background:#262626"></div>
<div class="a" style="left:126px;top:586px;width:1px;height:30px;background:#262626"></div>
<div class="a" style="left:157px;top:586px;width:1px;height:30px;background:#262626"></div>
<svg class="ic" style="left:40.5px;top:593px;width:16px;height:16px;" viewBox="0 0 24 24"><path fill="#959595" d="M22 9.24l-7.19-.62L12 2 9.19 8.63 2 9.24l5.46 4.73L5.82 21 12 17.27 18.18 21l-1.63-7.03L22 9.24zM12 15.4l-3.76 2.27 1-4.28-3.32-2.88 4.38-.38L12 6.1l1.71 4.04 4.38.38-3.32 2.88 1 4.28L12 15.4z"/></svg>
<svg class="ic" style="left:71.5px;top:593px;width:16px;height:16px;" viewBox="0 0 24 24"><path fill="#3c3c3c" d="M3 17.25V21h3.75L17.81 9.94l-3.75-3.75L3 17.25zM5.92 19H5v-.92l9.06-9.06.92.92L5.92 19zM20.71 5.63l-2.34-2.34c-.2-.2-.45-.29-.71-.29s-.51.1-.7.29l-1.83 1.83 3.75 3.75 1.83-1.83c.39-.39.39-1.02 0-1.41z"/></svg>
<svg class="ic" style="left:102.5px;top:593px;width:16px;height:16px;" viewBox="0 0 24 24"><path fill="#959595" d="M21.99 4c0-1.1-.89-2-1.99-2H4c-1.1 0-2 .9-2 2v12c0 1.1.9 2 2 2h14l4 4-.01-18zM20 4v13.17L18.83 16H4V4h16zM6 12h12v2H6zm0-3h12v2H6zm0-3h12v2H6z"/></svg>
<svg class="ic" style="left:133.5px;top:593px;width:16px;height:16px;" viewBox="0 0 24 24"><path fill="#959595" d="M12 6c3.79 0 7.17 2.13 8.82 5.5C19.17 14.87 15.79 17 12 17s-7.17-2.13-8.82-5.5C4.83 8.13 8.21 6 12 6m0-2C7 4 2.73 7.11 1 11.5 2.73 15.89 7 19 12 19s9.27-3.11 11-7.5C21.27 7.11 17 4 12 4zm0 5c1.38 0 2.5 1.12 2.5 2.5S13.38 14 12 14s-2.5-1.12-2.5-2.5S10.62 9 12 9m0-2c-2.48 0-4.5 2.02-4.5 4.5S9.52 16 12 16s4.5-2.02 4.5-4.5S14.48 7 12 7z"/></svg>
<svg class="ic" style="left:164.5px;top:593px;width:16px;height:16px;" viewBox="0 0 24 24"><path fill="#959595" d="M6 19c0 1.1.9 2 2 2h8c1.1 0 2-.9 2-2V7H6v12zM8 9h8v10H8V9zm7.5-5-1-1h-5l-1 1H5v2h14V4z"/></svg>
<div class="t" style="left:196.70px;top:593.00px;font-size:14.3px;color:#9e9e9e;font-weight:normal;transform:scaleX(0.9900);transform-origin:0 0;">return temperature (<span style="color:#496b8c;text-decoration:underline;text-decoration-color:#2c4459;text-underline-offset:1px">rettemp</span>)</div>
<div class="a" style="left:33px;top:616px;width:1040px;height:1px;background:#2e2e2e"></div>
<div class="a" style="left:33px;top:617px;width:1040px;height:1px;background:#272727"></div>
<div class="a" style="left:33px;top:618px;width:1040px;height:30px;background:#191919"></div>
<div class="a" style="left:33px;top:618px;width:156px;height:30px;border:1px solid #262626;border-radius:2px"></div>
<div class="a" style="left:64px;top:618px;width:1px;height:30px;background:#262626"></div>
<div class="a" style="left:95px;top:618px;width:1px;height:30px;background:#262626"></div>
<div class="a" style="left:126px;top:618px;width:1px;height:30px;background:#262626"></div>
<div class="a" style="left:157px;top:618px;width:1px;height:30px;background:#262626"></div>
<svg class="ic" style="left:40.5px;top:625px;width:16px;height:16px;" viewBox="0 0 24 24"><path fill="#959595" d="M22 9.24l-7.19-.62L12 2 9.19 8.63 2 9.24l5.46 4.73L5.82 21 12 17.27 18.18 21l-1.63-7.03L22 9.24zM12 15.4l-3.76 2.27 1-4.28-3.32-2.88 4.38-.38L12 6.1l1.71 4.04 4.38.38-3.32 2.88 1 4.28L12 15.4z"/></svg>
<svg class="ic" style="left:71.5px;top:625px;width:16px;height:16px;" viewBox="0 0 24 24"><path fill="#3c3c3c" d="M3 17.25V21h3.75L17.81 9.94l-3.75-3.75L3 17.25zM5.92 19H5v-.92l9.06-9.06.92.92L5.92 19zM20.71 5.63l-2.34-2.34c-.2-.2-.45-.29-.71-.29s-.51.1-.7.29l-1.83 1.83 3.75 3.75 1.83-1.83c.39-.39.39-1.02 0-1.41z"/></svg>
<svg class="ic" style="left:102.5px;top:625px;width:16px;height:16px;" viewBox="0 0 24 24"><path fill="#959595" d="M21.99 4c0-1.1-.89-2-1.99-2H4c-1.1 0-2 .9-2 2v12c0 1.1.9 2 2 2h14l4 4-.01-18zM20 4v13.17L18.83 16H4V4h16zM6 12h12v2H6zm0-3h12v2H6zm0-3h12v2H6z"/></svg>
<svg class="ic" style="left:133.5px;top:625px;width:16px;height:16px;" viewBox="0 0 24 24"><path fill="#959595" d="M12 6c3.79 0 7.17 2.13 8.82 5.5C19.17 14.87 15.79 17 12 17s-7.17-2.13-8.82-5.5C4.83 8.13 8.21 6 12 6m0-2C7 4 2.73 7.11 1 11.5 2.73 15.89 7 19 12 19s9.27-3.11 11-7.5C21.27 7.11 17 4 12 4zm0 5c1.38 0 2.5 1.12 2.5 2.5S13.38 14 12 14s-2.5-1.12-2.5-2.5S10.62 9 12 9m0-2c-2.48 0-4.5 2.02-4.5 4.5S9.52 16 12 16s4.5-2.02 4.5-4.5S14.48 7 12 7z"/></svg>
<svg class="ic" style="left:164.5px;top:625px;width:16px;height:16px;" viewBox="0 0 24 24"><path fill="#959595" d="M6 19c0 1.1.9 2 2 2h8c1.1 0 2-.9 2-2V7H6v12zM8 9h8v10H8V9zm7.5-5-1-1h-5l-1 1H5v2h14V4z"/></svg>
<div class="t" style="left:197.10px;top:625.00px;font-size:14.3px;color:#9e9e9e;font-weight:normal;transform:scaleX(0.9900);transform-origin:0 0;">system pressure (<span style="color:#496b8c;text-decoration:underline;text-decoration-color:#2c4459;text-underline-offset:1px">syspress</span>)</div>
<div class="t" style="left:1044.80px;top:625.00px;font-size:14.3px;color:#9e9e9e;font-weight:normal;">1,7</div>
<div class="a" style="left:33px;top:648px;width:1040px;height:1px;background:#2e2e2e"></div>
<div class="a" style="left:33px;top:649px;width:1040px;height:1px;background:#272727"></div>
<div class="a" style="left:33px;top:650px;width:1040px;height:30px;background:#0f0f0f"></div>
<div class="a" style="left:33px;top:650px;width:156px;height:30px;border:1px solid #262626;border-radius:2px"></div>
<div class="a" style="left:64px;top:650px;width:1px;height:30px;background:#262626"></div>
<div class="a" style="left:95px;top:650px;width:1px;height:30px;background:#262626"></div>
<div class="a" style="left:126px;top:650px;width:1px;height:30px;background:#262626"></div>
<div class="a" style="left:157px;top:650px;width:1px;height:30px;background:#262626"></div>
<svg class="ic" style="left:40.5px;top:657px;width:16px;height:16px;" viewBox="0 0 24 24"><path fill="#959595" d="M22 9.24l-7.19-.62L12 2 9.19 8.63 2 9.24l5.46 4.73L5.82 21 12 17.27 18.18 21l-1.63-7.03L22 9.24zM12 15.4l-3.76 2.27 1-4.28-3.32-2.88 4.38-.38L12 6.1l1.71 4.04 4.38.38-3.32 2.88 1 4.28L12 15.4z"/></svg>
<svg class="ic" style="left:71.5px;top:657px;width:16px;height:16px;" viewBox="0 0 24 24"><path fill="#3c3c3c" d="M3 17.25V21h3.75L17.81 9.94l-3.75-3.75L3 17.25zM5.92 19H5v-.92l9.06-9.06.92.92L5.92 19zM20.71 5.63l-2.34-2.34c-.2-.2-.45-.29-.71-.29s-.51.1-.7.29l-1.83 1.83 3.75 3.75 1.83-1.83c.39-.39.39-1.02 0-1.41z"/></svg>
<svg class="ic" style="left:102.5px;top:657px;width:16px;height:16px;" viewBox="0 0 24 24"><path fill="#959595" d="M21.99 4c0-1.1-.89-2-1.99-2H4c-1.1 0-2 .9-2 2v12c0 1.1.9 2 2 2h14l4 4-.01-18zM20 4v13.17L18.83 16H4V4h16zM6 12h12v2H6zm0-3h12v2H6zm0-3h12v2H6z"/></svg>
<svg class="ic" style="left:133.5px;top:657px;width:16px;height:16px;" viewBox="0 0 24 24"><path fill="#959595" d="M12 6c3.79 0 7.17 2.13 8.82 5.5C19.17 14.87 15.79 17 12 17s-7.17-2.13-8.82-5.5C4.83 8.13 8.21 6 12 6m0-2C7 4 2.73 7.11 1 11.5 2.73 15.89 7 19 12 19s9.27-3.11 11-7.5C21.27 7.11 17 4 12 4zm0 5c1.38 0 2.5 1.12 2.5 2.5S13.38 14 12 14s-2.5-1.12-2.5-2.5S10.62 9 12 9m0-2c-2.48 0-4.5 2.02-4.5 4.5S9.52 16 12 16s4.5-2.02 4.5-4.5S14.48 7 12 7z"/></svg>
<svg class="ic" style="left:164.5px;top:657px;width:16px;height:16px;" viewBox="0 0 24 24"><path fill="#959595" d="M6 19c0 1.1.9 2 2 2h8c1.1 0 2-.9 2-2V7H6v12zM8 9h8v10H8V9zm7.5-5-1-1h-5l-1 1H5v2h14V4z"/></svg>
<div class="t" style="left:197.10px;top:657.00px;font-size:14.3px;color:#9e9e9e;font-weight:normal;transform:scaleX(0.9900);transform-origin:0 0;">exhaust temperature (<span style="color:#496b8c;text-decoration:underline;text-decoration-color:#2c4459;text-underline-offset:1px">exhausttemp</span>)</div>
<div class="t" style="left:1036.80px;top:657.00px;font-size:14.3px;color:#9e9e9e;font-weight:normal;">33,6</div>
<div class="a" style="left:33px;top:680px;width:1040px;height:1px;background:#2e2e2e"></div>
<div class="a" style="left:33px;top:681px;width:1040px;height:1px;background:#272727"></div>
<div class="a" style="left:33px;top:682px;width:1040px;height:30px;background:#191919"></div>
<div class="a" style="left:33px;top:682px;width:156px;height:30px;border:1px solid #262626;border-radius:2px"></div>
<div class="a" style="left:64px;top:682px;width:1px;height:30px;background:#262626"></div>
<div class="a" style="left:95px;top:682px;width:1px;height:30px;background:#262626"></div>
<div class="a" style="left:126px;top:682px;width:1px;height:30px;background:#262626"></div>
<div class="a" style="left:157px;top:682px;width:1px;height:30px;background:#262626"></div>
<svg class="ic" style="left:40.5px;top:689px;width:16px;height:16px;" viewBox="0 0 24 24"><path fill="#959595" d="M22 9.24l-7.19-.62L12 2 9.19 8.63 2 9.24l5.46 4.73L5.82 21 12 17.27 18.18 21l-1.63-7.03L22 9.24zM12 15.4l-3.76 2.27 1-4.28-3.32-2.88 4.38-.38L12 6.1l1.71 4.04 4.38.38-3.32 2.88 1 4.28L12 15.4z"/></svg>
<svg class="ic" style="left:71.5px;top:689px;width:16px;height:16px;" viewBox="0 0 24 24"><path fill="#3c3c3c" d="M3 17.25V21h3.75L17.81 9.94l-3.75-3.75L3 17.25zM5.92 19H5v-.92l9.06-9.06.92.92L5.92 19zM20.71 5.63l-2.34-2.34c-.2-.2-.45-.29-.71-.29s-.51.1-.7.29l-1.83 1.83 3.75 3.75 1.83-1.83c.39-.39.39-1.02 0-1.41z"/></svg>
<svg class="ic" style="left:102.5px;top:689px;width:16px;height:16px;" viewBox="0 0 24 24"><path fill="#959595" d="M21.99 4c0-1.1-.89-2-1.99-2H4c-1.1 0-2 .9-2 2v12c0 1.1.9 2 2 2h14l4 4-.01-18zM20 4v13.17L18.83 16H4V4h16zM6 12h12v2H6zm0-3h12v2H6zm0-3h12v2H6z"/></svg>
<svg class="ic" style="left:133.5px;top:689px;width:16px;height:16px;" viewBox="0 0 24 24"><path fill="#959595" d="M12 6c3.79 0 7.17 2.13 8.82 5.5C19.17 14.87 15.79 17 12 17s-7.17-2.13-8.82-5.5C4.83 8.13 8.21 6 12 6m0-2C7 4 2.73 7.11 1 11.5 2.73 15.89 7 19 12 19s9.27-3.11 11-7.5C21.27 7.11 17 4 12 4zm0 5c1.38 0 2.5 1.12 2.5 2.5S13.38 14 12 14s-2.5-1.12-2.5-2.5S10.62 9 12 9m0-2c-2.48 0-4.5 2.02-4.5 4.5S9.52 16 12 16s4.5-2.02 4.5-4.5S14.48 7 12 7z"/></svg>
<svg class="ic" style="left:164.5px;top:689px;width:16px;height:16px;" viewBox="0 0 24 24"><path fill="#959595" d="M6 19c0 1.1.9 2 2 2h8c1.1 0 2-.9 2-2V7H6v12zM8 9h8v10H8V9zm7.5-5-1-1h-5l-1 1H5v2h14V4z"/></svg>
<div class="t" style="left:196.70px;top:689.00px;font-size:14.3px;color:#9e9e9e;font-weight:normal;transform:scaleX(0.9900);transform-origin:0 0;">boiler temperature (<span style="color:#496b8c;text-decoration:underline;text-decoration-color:#2c4459;text-underline-offset:1px">boiltemp</span>)</div>
<div class="a" style="left:33px;top:712px;width:1040px;height:1px;background:#2e2e2e"></div>
<div class="a" style="left:33px;top:713px;width:1040px;height:1px;background:#272727"></div>
<div class="a" style="left:33px;top:714px;width:1040px;height:30px;background:#0f0f0f"></div>
<div class="a" style="left:33px;top:714px;width:156px;height:30px;border:1px solid #262626;border-radius:2px"></div>
<div class="a" style="left:64px;top:714px;width:1px;height:30px;background:#262626"></div>
<div class="a" style="left:95px;top:714px;width:1px;height:30px;background:#262626"></div>
<div class="a" style="left:126px;top:714px;width:1px;height:30px;background:#262626"></div>
<div class="a" style="left:157px;top:714px;width:1px;height:30px;background:#262626"></div>
<svg class="ic" style="left:40.5px;top:721px;width:16px;height:16px;" viewBox="0 0 24 24"><path fill="#959595" d="M22 9.24l-7.19-.62L12 2 9.19 8.63 2 9.24l5.46 4.73L5.82 21 12 17.27 18.18 21l-1.63-7.03L22 9.24zM12 15.4l-3.76 2.27 1-4.28-3.32-2.88 4.38-.38L12 6.1l1.71 4.04 4.38.38-3.32 2.88 1 4.28L12 15.4z"/></svg>
<svg class="ic" style="left:71.5px;top:721px;width:16px;height:16px;" viewBox="0 0 24 24"><path fill="#3c3c3c" d="M3 17.25V21h3.75L17.81 9.94l-3.75-3.75L3 17.25zM5.92 19H5v-.92l9.06-9.06.92.92L5.92 19zM20.71 5.63l-2.34-2.34c-.2-.2-.45-.29-.71-.29s-.51.1-.7.29l-1.83 1.83 3.75 3.75 1.83-1.83c.39-.39.39-1.02 0-1.41z"/></svg>
<svg class="ic" style="left:102.5px;top:721px;width:16px;height:16px;" viewBox="0 0 24 24"><path fill="#959595" d="M21.99 4c0-1.1-.89-2-1.99-2H4c-1.1 0-2 .9-2 2v12c0 1.1.9 2 2 2h14l4 4-.01-18zM20 4v13.17L18.83 16H4V4h16zM6 12h12v2H6zm0-3h12v2H6zm0-3h12v2H6z"/></svg>
<svg class="ic" style="left:133.5px;top:721px;width:16px;height:16px;" viewBox="0 0 24 24"><path fill="#959595" d="M12 6c3.79 0 7.17 2.13 8.82 5.5C19.17 14.87 15.79 17 12 17s-7.17-2.13-8.82-5.5C4.83 8.13 8.21 6 12 6m0-2C7 4 2.73 7.11 1 11.5 2.73 15.89 7 19 12 19s9.27-3.11 11-7.5C21.27 7.11 17 4 12 4zm0 5c1.38 0 2.5 1.12 2.5 2.5S13.38 14 12 14s-2.5-1.12-2.5-2.5S10.62 9 12 9m0-2c-2.48 0-4.5 2.02-4.5 4.5S9.52 16 12 16s4.5-2.02 4.5-4.5S14.48 7 12 7z"/></svg>
<svg class="ic" style="left:164.5px;top:721px;width:16px;height:16px;" viewBox="0 0 24 24"><path fill="#959595" d="M6 19c0 1.1.9 2 2 2h8c1.1 0 2-.9 2-2V7H6v12zM8 9h8v10H8V9zm7.5-5-1-1h-5l-1 1H5v2h14V4z"/></svg>
<div class="t" style="left:196.70px;top:721.00px;font-size:14.3px;color:#9e9e9e;font-weight:normal;transform:scaleX(0.9900);transform-origin:0 0;">heatblock temperature (<span style="color:#496b8c;text-decoration:underline;text-decoration-color:#2c4459;text-underline-offset:1px">headertemp</span>)</div>
<div class="a" style="left:33px;top:744px;width:1040px;height:1px;background:#2e2e2e"></div>
<div class="a" style="left:33px;top:745px;width:1040px;height:1px;background:#272727"></div>
<div class="a" style="left:33px;top:746px;width:1040px;height:30px;background:#191919"></div>
<div class="a" style="left:33px;top:746px;width:156px;height:30px;border:1px solid #262626;border-radius:2px"></div>
<div class="a" style="left:64px;top:746px;width:1px;height:30px;background:#262626"></div>
<div class="a" style="left:95px;top:746px;width:1px;height:30px;background:#262626"></div>
<div class="a" style="left:126px;top:746px;width:1px;height:30px;background:#262626"></div>
<div class="a" style="left:157px;top:746px;width:1px;height:30px;background:#262626"></div>
<svg class="ic" style="left:40.5px;top:753px;width:16px;height:16px;" viewBox="0 0 24 24"><path fill="#959595" d="M22 9.24l-7.19-.62L12 2 9.19 8.63 2 9.24l5.46 4.73L5.82 21 12 17.27 18.18 21l-1.63-7.03L22 9.24zM12 15.4l-3.76 2.27 1-4.28-3.32-2.88 4.38-.38L12 6.1l1.71 4.04 4.38.38-3.32 2.88 1 4.28L12 15.4z"/></svg>
<svg class="ic" style="left:71.5px;top:753px;width:16px;height:16px;" viewBox="0 0 24 24"><path fill="#3c3c3c" d="M3 17.25V21h3.75L17.81 9.94l-3.75-3.75L3 17.25zM5.92 19H5v-.92l9.06-9.06.92.92L5.92 19zM20.71 5.63l-2.34-2.34c-.2-.2-.45-.29-.71-.29s-.51.1-.7.29l-1.83 1.83 3.75 3.75 1.83-1.83c.39-.39.39-1.02 0-1.41z"/></svg>
<svg class="ic" style="left:102.5px;top:753px;width:16px;height:16px;" viewBox="0 0 24 24"><path fill="#959595" d="M21.99 4c0-1.1-.89-2-1.99-2H4c-1.1 0-2 .9-2 2v12c0 1.1.9 2 2 2h14l4 4-.01-18zM20 4v13.17L18.83 16H4V4h16zM6 12h12v2H6zm0-3h12v2H6zm0-3h12v2H6z"/></svg>
<svg class="ic" style="left:133.5px;top:753px;width:16px;height:16px;" viewBox="0 0 24 24"><path fill="#959595" d="M12 6c3.79 0 7.17 2.13 8.82 5.5C19.17 14.87 15.79 17 12 17s-7.17-2.13-8.82-5.5C4.83 8.13 8.21 6 12 6m0-2C7 4 2.73 7.11 1 11.5 2.73 15.89 7 19 12 19s9.27-3.11 11-7.5C21.27 7.11 17 4 12 4zm0 5c1.38 0 2.5 1.12 2.5 2.5S13.38 14 12 14s-2.5-1.12-2.5-2.5S10.62 9 12 9m0-2c-2.48 0-4.5 2.02-4.5 4.5S9.52 16 12 16s4.5-2.02 4.5-4.5S14.48 7 12 7z"/></svg>
<svg class="ic" style="left:164.5px;top:753px;width:16px;height:16px;" viewBox="0 0 24 24"><path fill="#959595" d="M6 19c0 1.1.9 2 2 2h8c1.1 0 2-.9 2-2V7H6v12zM8 9h8v10H8V9zm7.5-5-1-1h-5l-1 1H5v2h14V4z"/></svg>
<div class="t" style="left:197.10px;top:753.00px;font-size:14.3px;color:#9e9e9e;font-weight:normal;">gas (<span style="color:#496b8c;text-decoration:underline;text-decoration-color:#2c4459;text-underline-offset:1px">burngas</span>)</div>
<div class="t" style="left:1046.80px;top:753.00px;font-size:14.3px;color:#9e9e9e;font-weight:normal;transform:scaleX(1.1250);transform-origin:0 0;">off</div>
<div class="a" style="left:33px;top:776px;width:1040px;height:1px;background:#2e2e2e"></div>
<div class="a" style="left:33px;top:777px;width:1040px;height:1px;background:#272727"></div>
<div class="a" style="left:33px;top:778px;width:1040px;height:30px;background:#0f0f0f"></div>
<div class="a" style="left:33px;top:778px;width:156px;height:30px;border:1px solid #262626;border-radius:2px"></div>
<div class="a" style="left:64px;top:778px;width:1px;height:30px;background:#262626"></div>
<div class="a" style="left:95px;top:778px;width:1px;height:30px;background:#262626"></div>
<div class="a" style="left:126px;top:778px;width:1px;height:30px;background:#262626"></div>
<div class="a" style="left:157px;top:778px;width:1px;height:30px;background:#262626"></div>
<svg class="ic" style="left:40.5px;top:785px;width:16px;height:16px;" viewBox="0 0 24 24"><path fill="#959595" d="M22 9.24l-7.19-.62L12 2 9.19 8.63 2 9.24l5.46 4.73L5.82 21 12 17.27 18.18 21l-1.63-7.03L22 9.24zM12 15.4l-3.76 2.27 1-4.28-3.32-2.88 4.38-.38L12 6.1l1.71 4.04 4.38.38-3.32 2.88 1 4.28L12 15.4z"/></svg>
<svg class="ic" style="left:71.5px;top:785px;width:16px;height:16px;" viewBox="0 0 24 24"><path fill="#3c3c3c" d="M3 17.25V21h3.75L17.81 9.94l-3.75-3.75L3 17.25zM5.92 19H5v-.92l9.06-9.06.92.92L5.92 19zM20.71 5.63l-2.34-2.34c-.2-.2-.45-.29-.71-.29s-.51.1-.7.29l-1.83 1.83 3.75 3.75 1.83-1.83c.39-.39.39-1.02 0-1.41z"/></svg>
<svg class="ic" style="left:102.5px;top:785px;width:16px;height:16px;" viewBox="0 0 24 24"><path fill="#959595" d="M21.99 4c0-1.1-.89-2-1.99-2H4c-1.1 0-2 .9-2 2v12c0 1.1.9 2 2 2h14l4 4-.01-18zM20 4v13.17L18.83 16H4V4h16zM6 12h12v2H6zm0-3h12v2H6zm0-3h12v2H6z"/></svg>
<svg class="ic" style="left:133.5px;top:785px;width:16px;height:16px;" viewBox="0 0 24 24"><path fill="#959595" d="M12 6c3.79 0 7.17 2.13 8.82 5.5C19.17 14.87 15.79 17 12 17s-7.17-2.13-8.82-5.5C4.83 8.13 8.21 6 12 6m0-2C7 4 2.73 7.11 1 11.5 2.73 15.89 7 19 12 19s9.27-3.11 11-7.5C21.27 7.11 17 4 12 4zm0 5c1.38 0 2.5 1.12 2.5 2.5S13.38 14 12 14s-2.5-1.12-2.5-2.5S10.62 9 12 9m0-2c-2.48 0-4.5 2.02-4.5 4.5S9.52 16 12 16s4.5-2.02 4.5-4.5S14.48 7 12 7z"/></svg>
<svg class="ic" style="left:164.5px;top:785px;width:16px;height:16px;" viewBox="0 0 24 24"><path fill="#959595" d="M6 19c0 1.1.9 2 2 2h8c1.1 0 2-.9 2-2V7H6v12zM8 9h8v10H8V9zm7.5-5-1-1h-5l-1 1H5v2h14V4z"/></svg>
<div class="t" style="left:197.10px;top:785.00px;font-size:14.3px;color:#9e9e9e;font-weight:normal;transform:scaleX(0.9925);transform-origin:0 0;">gas stage 2 (<span style="color:#496b8c;text-decoration:underline;text-decoration-color:#2c4459;text-underline-offset:1px">burngas2</span>)</div>
<div class="t" style="left:1046.80px;top:785.00px;font-size:14.3px;color:#9e9e9e;font-weight:normal;transform:scaleX(1.1250);transform-origin:0 0;">off</div>
<div class="a" style="left:33px;top:808px;width:1040px;height:1px;background:#2e2e2e"></div>
<div class="a" style="left:33px;top:809px;width:1040px;height:1px;background:#272727"></div>
<div class="a" style="left:33px;top:810px;width:1040px;height:30px;background:#191919"></div>
<div class="a" style="left:33px;top:810px;width:156px;height:30px;border:1px solid #262626;border-radius:2px"></div>
<div class="a" style="left:64px;top:810px;width:1px;height:30px;background:#262626"></div>
<div class="a" style="left:95px;top:810px;width:1px;height:30px;background:#262626"></div>
<div class="a" style="left:126px;top:810px;width:1px;height:30px;background:#262626"></div>
<div class="a" style="left:157px;top:810px;width:1px;height:30px;background:#262626"></div>
<svg class="ic" style="left:40.5px;top:817px;width:16px;height:16px;" viewBox="0 0 24 24"><path fill="#959595" d="M22 9.24l-7.19-.62L12 2 9.19 8.63 2 9.24l5.46 4.73L5.82 21 12 17.27 18.18 21l-1.63-7.03L22 9.24zM12 15.4l-3.76 2.27 1-4.28-3.32-2.88 4.38-.38L12 6.1l1.71 4.04 4.38.38-3.32 2.88 1 4.28L12 15.4z"/></svg>
<svg class="ic" style="left:71.5px;top:817px;width:16px;height:16px;" viewBox="0 0 24 24"><path fill="#3c3c3c" d="M3 17.25V21h3.75L17.81 9.94l-3.75-3.75L3 17.25zM5.92 19H5v-.92l9.06-9.06.92.92L5.92 19zM20.71 5.63l-2.34-2.34c-.2-.2-.45-.29-.71-.29s-.51.1-.7.29l-1.83 1.83 3.75 3.75 1.83-1.83c.39-.39.39-1.02 0-1.41z"/></svg>
<svg class="ic" style="left:102.5px;top:817px;width:16px;height:16px;" viewBox="0 0 24 24"><path fill="#959595" d="M21.99 4c0-1.1-.89-2-1.99-2H4c-1.1 0-2 .9-2 2v12c0 1.1.9 2 2 2h14l4 4-.01-18zM20 4v13.17L18.83 16H4V4h16zM6 12h12v2H6zm0-3h12v2H6zm0-3h12v2H6z"/></svg>
<svg class="ic" style="left:133.5px;top:817px;width:16px;height:16px;" viewBox="0 0 24 24"><path fill="#959595" d="M12 6c3.79 0 7.17 2.13 8.82 5.5C19.17 14.87 15.79 17 12 17s-7.17-2.13-8.82-5.5C4.83 8.13 8.21 6 12 6m0-2C7 4 2.73 7.11 1 11.5 2.73 15.89 7 19 12 19s9.27-3.11 11-7.5C21.27 7.11 17 4 12 4zm0 5c1.38 0 2.5 1.12 2.5 2.5S13.38 14 12 14s-2.5-1.12-2.5-2.5S10.62 9 12 9m0-2c-2.48 0-4.5 2.02-4.5 4.5S9.52 16 12 16s4.5-2.02 4.5-4.5S14.48 7 12 7z"/></svg>
<svg class="ic" style="left:164.5px;top:817px;width:16px;height:16px;" viewBox="0 0 24 24"><path fill="#959595" d="M6 19c0 1.1.9 2 2 2h8c1.1 0 2-.9 2-2V7H6v12zM8 9h8v10H8V9zm7.5-5-1-1h-5l-1 1H5v2h14V4z"/></svg>
<div class="t" style="left:197.10px;top:817.00px;font-size:14.3px;color:#9e9e9e;font-weight:normal;transform:scaleX(1.0186);transform-origin:0 0;">flame current (<span style="color:#496b8c;text-decoration:underline;text-decoration-color:#2c4459;text-underline-offset:1px">flamecurr</span>)</div>
<div class="t" style="left:1056.80px;top:817.00px;font-size:14.3px;color:#9e9e9e;font-weight:normal;">0</div>
<div class="a" style="left:33px;top:840px;width:1040px;height:1px;background:#2e2e2e"></div>
<div class="a" style="left:33px;top:841px;width:1040px;height:1px;background:#272727"></div>
<div class="a" style="left:33px;top:842px;width:1040px;height:30px;background:#0f0f0f"></div>
<div class="a" style="left:33px;top:842px;width:156px;height:30px;border:1px solid #262626;border-radius:2px"></div>
<div class="a" style="left:64px;top:842px;width:1px;height:30px;background:#262626"></div>
<div class="a" style="left:95px;top:842px;width:1px;height:30px;background:#262626"></div>
<div class="a" style="left:126px;top:842px;width:1px;height:30px;background:#262626"></div>
<div class="a" style="left:157px;top:842px;width:1px;height:30px;background:#262626"></div>
<svg class="ic" style="left:40.5px;top:849px;width:16px;height:16px;" viewBox="0 0 24 24"><path fill="#959595" d="M22 9.24l-7.19-.62L12 2 9.19 8.63 2 9.24l5.46 4.73L5.82 21 12 17.27 18.18 21l-1.63-7.03L22 9.24zM12 15.4l-3.76 2.27 1-4.28-3.32-2.88 4.38-.38L12 6.1l1.71 4.04 4.38.38-3.32 2.88 1 4.28L12 15.4z"/></svg>
<svg class="ic" style="left:71.5px;top:849px;width:16px;height:16px;" viewBox="0 0 24 24"><path fill="#3c3c3c" d="M3 17.25V21h3.75L17.81 9.94l-3.75-3.75L3 17.25zM5.92 19H5v-.92l9.06-9.06.92.92L5.92 19zM20.71 5.63l-2.34-2.34c-.2-.2-.45-.29-.71-.29s-.51.1-.7.29l-1.83 1.83 3.75 3.75 1.83-1.83c.39-.39.39-1.02 0-1.41z"/></svg>
<svg class="ic" style="left:102.5px;top:849px;width:16px;height:16px;" viewBox="0 0 24 24"><path fill="#959595" d="M21.99 4c0-1.1-.89-2-1.99-2H4c-1.1 0-2 .9-2 2v12c0 1.1.9 2 2 2h14l4 4-.01-18zM20 4v13.17L18.83 16H4V4h16zM6 12h12v2H6zm0-3h12v2H6zm0-3h12v2H6z"/></svg>
<svg class="ic" style="left:133.5px;top:849px;width:16px;height:16px;" viewBox="0 0 24 24"><path fill="#959595" d="M12 6c3.79 0 7.17 2.13 8.82 5.5C19.17 14.87 15.79 17 12 17s-7.17-2.13-8.82-5.5C4.83 8.13 8.21 6 12 6m0-2C7 4 2.73 7.11 1 11.5 2.73 15.89 7 19 12 19s9.27-3.11 11-7.5C21.27 7.11 17 4 12 4zm0 5c1.38 0 2.5 1.12 2.5 2.5S13.38 14 12 14s-2.5-1.12-2.5-2.5S10.62 9 12 9m0-2c-2.48 0-4.5 2.02-4.5 4.5S9.52 16 12 16s4.5-2.02 4.5-4.5S14.48 7 12 7z"/></svg>
<svg class="ic" style="left:164.5px;top:849px;width:16px;height:16px;" viewBox="0 0 24 24"><path fill="#959595" d="M6 19c0 1.1.9 2 2 2h8c1.1 0 2-.9 2-2V7H6v12zM8 9h8v10H8V9zm7.5-5-1-1h-5l-1 1H5v2h14V4z"/></svg>
<div class="t" style="left:197.10px;top:849.00px;font-size:14.3px;color:#9e9e9e;font-weight:normal;transform:scaleX(1.0169);transform-origin:0 0;">fan (<span style="color:#496b8c;text-decoration:underline;text-decoration-color:#2c4459;text-underline-offset:1px">fanwork</span>)</div>
<div class="t" style="left:1046.80px;top:849.00px;font-size:14.3px;color:#9e9e9e;font-weight:normal;transform:scaleX(1.1250);transform-origin:0 0;">off</div>
<div class="a" style="left:33px;top:872px;width:1040px;height:1px;background:#2e2e2e"></div>
<div class="a" style="left:33px;top:873px;width:1040px;height:1px;background:#272727"></div>
<div class="a" style="left:33px;top:874px;width:1040px;height:30px;background:#191919"></div>
<div class="a" style="left:33px;top:874px;width:156px;height:30px;border:1px solid #262626;border-radius:2px"></div>
<div class="a" style="left:64px;top:874px;width:1px;height:30px;background:#262626"></div>
<div class="a" style="left:95px;top:874px;width:1px;height:30px;background:#262626"></div>
<div class="a" style="left:126px;top:874px;width:1px;height:30px;background:#262626"></div>
<div class="a" style="left:157px;top:874px;width:1px;height:30px;background:#262626"></div>
<svg class="ic" style="left:40.5px;top:881px;width:16px;height:16px;" viewBox="0 0 24 24"><path fill="#959595" d="M22 9.24l-7.19-.62L12 2 9.19 8.63 2 9.24l5.46 4.73L5.82 21 12 17.27 18.18 21l-1.63-7.03L22 9.24zM12 15.4l-3.76 2.27 1-4.28-3.32-2.88 4.38-.38L12 6.1l1.71 4.04 4.38.38-3.32 2.88 1 4.28L12 15.4z"/></svg>
<svg class="ic" style="left:71.5px;top:881px;width:16px;height:16px;" viewBox="0 0 24 24"><path fill="#3c3c3c" d="M3 17.25V21h3.75L17.81 9.94l-3.75-3.75L3 17.25zM5.92 19H5v-.92l9.06-9.06.92.92L5.92 19zM20.71 5.63l-2.34-2.34c-.2-.2-.45-.29-.71-.29s-.51.1-.7.29l-1.83 1.83 3.75 3.75 1.83-1.83c.39-.39.39-1.02 0-1.41z"/></svg>
<svg class="ic" style="left:102.5px;top:881px;width:16px;height:16px;" viewBox="0 0 24 24"><path fill="#959595" d="M21.99 4c0-1.1-.89-2-1.99-2H4c-1.1 0-2 .9-2 2v12c0 1.1.9 2 2 2h14l4 4-.01-18zM20 4v13.17L18.83 16H4V4h16zM6 12h12v2H6zm0-3h12v2H6zm0-3h12v2H6z"/></svg>
<svg class="ic" style="left:133.5px;top:881px;width:16px;height:16px;" viewBox="0 0 24 24"><path fill="#959595" d="M12 6c3.79 0 7.17 2.13 8.82 5.5C19.17 14.87 15.79 17 12 17s-7.17-2.13-8.82-5.5C4.83 8.13 8.21 6 12 6m0-2C7 4 2.73 7.11 1 11.5 2.73 15.89 7 19 12 19s9.27-3.11 11-7.5C21.27 7.11 17 4 12 4zm0 5c1.38 0 2.5 1.12 2.5 2.5S13.38 14 12 14s-2.5-1.12-2.5-2.5S10.62 9 12 9m0-2c-2.48 0-4.5 2.02-4.5 4.5S9.52 16 12 16s4.5-2.02 4.5-4.5S14.48 7 12 7z"/></svg>
<svg class="ic" style="left:164.5px;top:881px;width:16px;height:16px;" viewBox="0 0 24 24"><path fill="#959595" d="M6 19c0 1.1.9 2 2 2h8c1.1 0 2-.9 2-2V7H6v12zM8 9h8v10H8V9zm7.5-5-1-1h-5l-1 1H5v2h14V4z"/></svg>
<div class="t" style="left:196.69px;top:881.00px;font-size:14.3px;color:#9e9e9e;font-weight:normal;transform:scaleX(1.0271);transform-origin:0 0;">ignition (<span style="color:#496b8c;text-decoration:underline;text-decoration-color:#2c4459;text-underline-offset:1px">ignwork</span>)</div>
<div class="t" style="left:1046.80px;top:881.00px;font-size:14.3px;color:#9e9e9e;font-weight:normal;transform:scaleX(1.1250);transform-origin:0 0;">off</div>
<div class="a" style="left:33px;top:904px;width:1040px;height:1px;background:#2e2e2e"></div>
<div class="a" style="left:33px;top:905px;width:1040px;height:1px;background:#272727"></div>
<div class="a" style="left:33px;top:906px;width:1040px;height:30px;background:#0f0f0f"></div>
<div class="a" style="left:33px;top:906px;width:156px;height:30px;border:1px solid #262626;border-radius:2px"></div>
<div class="a" style="left:64px;top:906px;width:1px;height:30px;background:#262626"></div>
<div class="a" style="left:95px;top:906px;width:1px;height:30px;background:#262626"></div>
<div class="a" style="left:126px;top:906px;width:1px;height:30px;background:#262626"></div>
<div class="a" style="left:157px;top:906px;width:1px;height:30px;background:#262626"></div>
<svg class="ic" style="left:40.5px;top:913px;width:16px;height:16px;" viewBox="0 0 24 24"><path fill="#959595" d="M22 9.24l-7.19-.62L12 2 9.19 8.63 2 9.24l5.46 4.73L5.82 21 12 17.27 18.18 21l-1.63-7.03L22 9.24zM12 15.4l-3.76 2.27 1-4.28-3.32-2.88 4.38-.38L12 6.1l1.71 4.04 4.38.38-3.32 2.88 1 4.28L12 15.4z"/></svg>
<svg class="ic" style="left:71.5px;top:913px;width:16px;height:16px;" viewBox="0 0 24 24"><path fill="#3c3c3c" d="M3 17.25V21h3.75L17.81 9.94l-3.75-3.75L3 17.25zM5.92 19H5v-.92l9.06-9.06.92.92L5.92 19zM20.71 5.63l-2.34-2.34c-.2-.2-.45-.29-.71-.29s-.51.1-.7.29l-1.83 1.83 3.75 3.75 1.83-1.83c.39-.39.39-1.02 0-1.41z"/></svg>
<svg class="ic" style="left:102.5px;top:913px;width:16px;height:16px;" viewBox="0 0 24 24"><path fill="#959595" d="M21.99 4c0-1.1-.89-2-1.99-2H4c-1.1 0-2 .9-2 2v12c0 1.1.9 2 2 2h14l4 4-.01-18zM20 4v13.17L18.83 16H4V4h16zM6 12h12v2H6zm0-3h12v2H6zm0-3h12v2H6z"/></svg>
<svg class="ic" style="left:133.5px;top:913px;width:16px;height:16px;" viewBox="0 0 24 24"><path fill="#959595" d="M12 6c3.79 0 7.17 2.13 8.82 5.5C19.17 14.87 15.79 17 12 17s-7.17-2.13-8.82-5.5C4.83 8.13 8.21 6 12 6m0-2C7 4 2.73 7.11 1 11.5 2.73 15.89 7 19 12 19s9.27-3.11 11-7.5C21.27 7.11 17 4 12 4zm0 5c1.38 0 2.5 1.12 2.5 2.5S13.38 14 12 14s-2.5-1.12-2.5-2.5S10.62 9 12 9m0-2c-2.48 0-4.5 2.02-4.5 4.5S9.52 16 12 16s4.5-2.02 4.5-4.5S14.48 7 12 7z"/></svg>
<svg class="ic" style="left:164.5px;top:913px;width:16px;height:16px;" viewBox="0 0 24 24"><path fill="#959595" d="M6 19c0 1.1.9 2 2 2h8c1.1 0 2-.9 2-2V7H6v12zM8 9h8v10H8V9zm7.5-5-1-1h-5l-1 1H5v2h14V4z"/></svg>
<div class="t" style="left:197.10px;top:913.00px;font-size:14.3px;color:#9e9e9e;font-weight:normal;">oil preheating (<span style="color:#496b8c;text-decoration:underline;text-decoration-color:#2c4459;text-underline-offset:1px">oilpreheat</span>)</div>
<div class="t" style="left:1046.80px;top:913.00px;font-size:14.3px;color:#9e9e9e;font-weight:normal;transform:scaleX(1.1250);transform-origin:0 0;">off</div>
<div class="a" style="left:33px;top:936px;width:1040px;height:1px;background:#2e2e2e"></div>
<div class="a" style="left:33px;top:937px;width:1040px;height:1px;background:#272727"></div>
<div class="a" style="left:33px;top:938px;width:1040px;height:30px;background:#191919"></div>
<div class="a" style="left:33px;top:938px;width:156px;height:30px;border:1px solid #262626;border-radius:2px"></div>
<div class="a" style="left:64px;top:938px;width:1px;height:30px;background:#262626"></div>
<div class="a" style="left:95px;top:938px;width:1px;height:30px;background:#262626"></div>
<div class="a" style="left:126px;top:938px;width:1px;height:30px;background:#262626"></div>
<div class="a" style="left:157px;top:938px;width:1px;height:30px;background:#262626"></div>
<svg class="ic" style="left:40.5px;top:945px;width:16px;height:16px;" viewBox="0 0 24 24"><path fill="#959595" d="M22 9.24l-7.19-.62L12 2 9.19 8.63 2 9.24l5.46 4.73L5.82 21 12 17.27 18.18 21l-1.63-7.03L22 9.24zM12 15.4l-3.76 2.27 1-4.28-3.32-2.88 4.38-.38L12 6.1l1.71 4.04 4.38.38-3.32 2.88 1 4.28L12 15.4z"/></svg>
<svg class="ic" style="left:71.5px;top:945px;width:16px;height:16px;" viewBox="0 0 24 24"><path fill="#959595" d="M3 17.25V21h3.75L17.81 9.94l-3.75-3.75L3 17.25zM5.92 19H5v-.92l9.06-9.06.92.92L5.92 19zM20.71 5.63l-2.34-2.34c-.2-.2-.45-.29-.71-.29s-.51.1-.7.29l-1.83 1.83 3.75 3.75 1.83-1.83c.39-.39.39-1.02 0-1.41z"/></svg>
<svg class="ic" style="left:102.5px;top:945px;width:16px;height:16px;" viewBox="0 0 24 24"><path fill="#959595" d="M21.99 4c0-1.1-.89-2-1.99-2H4c-1.1 0-2 .9-2 2v12c0 1.1.9 2 2 2h14l4 4-.01-18zM20 4v13.17L18.83 16H4V4h16zM6 12h12v2H6zm0-3h12v2H6zm0-3h12v2H6z"/></svg>
<svg class="ic" style="left:133.5px;top:945px;width:16px;height:16px;" viewBox="0 0 24 24"><path fill="#959595" d="M12 6c3.79 0 7.17 2.13 8.82 5.5C19.17 14.87 15.79 17 12 17s-7.17-2.13-8.82-5.5C4.83 8.13 8.21 6 12 6m0-2C7 4 2.73 7.11 1 11.5 2.73 15.89 7 19 12 19s9.27-3.11 11-7.5C21.27 7.11 17 4 12 4zm0 5c1.38 0 2.5 1.12 2.5 2.5S13.38 14 12 14s-2.5-1.12-2.5-2.5S10.62 9 12 9m0-2c-2.48 0-4.5 2.02-4.5 4.5S9.52 16 12 16s4.5-2.02 4.5-4.5S14.48 7 12 7z"/></svg>
<svg class="ic" style="left:164.5px;top:945px;width:16px;height:16px;" viewBox="0 0 24 24"><path fill="#959595" d="M6 19c0 1.1.9 2 2 2h8c1.1 0 2-.9 2-2V7H6v12zM8 9h8v10H8V9zm7.5-5-1-1h-5l-1 1H5v2h14V4z"/></svg>
<div class="t" style="left:196.70px;top:945.00px;font-size:14.3px;color:#9e9e9e;font-weight:normal;transform:scaleX(1.0070);transform-origin:0 0;">burner min power (<span style="color:#496b8c;text-decoration:underline;text-decoration-color:#2c4459;text-underline-offset:1px">burnminpower</span>)</div>
<div class="t" style="left:762.50px;top:945.00px;font-size:14.3px;color:#9e9e9e;font-weight:normal;">0</div>
<div class="t" style="left:823.40px;top:945.00px;font-size:14.3px;color:#9e9e9e;font-weight:normal;">115</div>
<div class="t" style="left:1056.80px;top:945.00px;font-size:14.3px;color:#9e9e9e;font-weight:normal;">0</div>
<div class="a" style="left:33px;top:968px;width:1040px;height:1px;background:#2e2e2e"></div>
<div class="a" style="left:33px;top:969px;width:1040px;height:1px;background:#272727"></div>
<div class="a" style="left:33px;top:970px;width:1040px;height:30px;background:#0f0f0f"></div>
<div class="a" style="left:33px;top:970px;width:156px;height:30px;border:1px solid #262626;border-radius:2px"></div>
<div class="a" style="left:64px;top:970px;width:1px;height:30px;background:#262626"></div>
<div class="a" style="left:95px;top:970px;width:1px;height:30px;background:#262626"></div>
<div class="a" style="left:126px;top:970px;width:1px;height:30px;background:#262626"></div>
<div class="a" style="left:157px;top:970px;width:1px;height:30px;background:#262626"></div>
<svg class="ic" style="left:40.5px;top:977px;width:16px;height:16px;" viewBox="0 0 24 24"><path fill="#959595" d="M22 9.24l-7.19-.62L12 2 9.19 8.63 2 9.24l5.46 4.73L5.82 21 12 17.27 18.18 21l-1.63-7.03L22 9.24zM12 15.4l-3.76 2.27 1-4.28-3.32-2.88 4.38-.38L12 6.1l1.71 4.04 4.38.38-3.32 2.88 1 4.28L12 15.4z"/></svg>
<svg class="ic" style="left:71.5px;top:977px;width:16px;height:16px;" viewBox="0 0 24 24"><path fill="#959595" d="M3 17.25V21h3.75L17.81 9.94l-3.75-3.75L3 17.25zM5.92 19H5v-.92l9.06-9.06.92.92L5.92 19zM20.71 5.63l-2.34-2.34c-.2-.2-.45-.29-.71-.29s-.51.1-.7.29l-1.83 1.83 3.75 3.75 1.83-1.83c.39-.39.39-1.02 0-1.41z"/></svg>
<svg class="ic" style="left:102.5px;top:977px;width:16px;height:16px;" viewBox="0 0 24 24"><path fill="#959595" d="M21.99 4c0-1.1-.89-2-1.99-2H4c-1.1 0-2 .9-2 2v12c0 1.1.9 2 2 2h14l4 4-.01-18zM20 4v13.17L18.83 16H4V4h16zM6 12h12v2H6zm0-3h12v2H6zm0-3h12v2H6z"/></svg>
<svg class="ic" style="left:133.5px;top:977px;width:16px;height:16px;" viewBox="0 0 24 24"><path fill="#959595" d="M12 6c3.79 0 7.17 2.13 8.82 5.5C19.17 14.87 15.79 17 12 17s-7.17-2.13-8.82-5.5C4.83 8.13 8.21 6 12 6m0-2C7 4 2.73 7.11 1 11.5 2.73 15.89 7 19 12 19s9.27-3.11 11-7.5C21.27 7.11 17 4 12 4zm0 5c1.38 0 2.5 1.12 2.5 2.5S13.38 14 12 14s-2.5-1.12-2.5-2.5S10.62 9 12 9m0-2c-2.48 0-4.5 2.02-4.5 4.5S9.52 16 12 16s4.5-2.02 4.5-4.5S14.48 7 12 7z"/></svg>
<svg class="ic" style="left:164.5px;top:977px;width:16px;height:16px;" viewBox="0 0 24 24"><path fill="#959595" d="M6 19c0 1.1.9 2 2 2h8c1.1 0 2-.9 2-2V7H6v12zM8 9h8v10H8V9zm7.5-5-1-1h-5l-1 1H5v2h14V4z"/></svg>
<div class="t" style="left:196.70px;top:977.00px;font-size:14.3px;color:#9e9e9e;font-weight:normal;transform:scaleX(1.0036);transform-origin:0 0;">burner max power (<span style="color:#496b8c;text-decoration:underline;text-decoration-color:#2c4459;text-underline-offset:1px">burnmaxpower</span>)</div>
<div class="t" style="left:754.50px;top:977.00px;font-size:14.3px;color:#9e9e9e;font-weight:normal;">23</div>
<div class="t" style="left:823.40px;top:977.00px;font-size:14.3px;color:#9e9e9e;font-weight:normal;">115</div>
<div class="t" style="left:1048.80px;top:977.00px;font-size:14.3px;color:#9e9e9e;font-weight:normal;">50</div>
<div class="a" style="left:33px;top:1000px;width:1040px;height:1px;background:#2e2e2e"></div>
<div class="a" style="left:33px;top:1001px;width:1040px;height:1px;background:#272727"></div>
<div class="a" style="left:33px;top:1002px;width:1040px;height:30px;background:#191919"></div>
<div class="a" style="left:33px;top:1002px;width:156px;height:30px;border:1px solid #262626;border-radius:2px"></div>
<div class="a" style="left:64px;top:1002px;width:1px;height:30px;background:#262626"></div>
<div class="a" style="left:95px;top:1002px;width:1px;height:30px;background:#262626"></div>
<div class="a" style="left:126px;top:1002px;width:1px;height:30px;background:#262626"></div>
<div class="a" style="left:157px;top:1002px;width:1px;height:30px;background:#262626"></div>
<svg class="ic" style="left:40.5px;top:1009px;width:16px;height:16px;" viewBox="0 0 24 24"><path fill="#959595" d="M22 9.24l-7.19-.62L12 2 9.19 8.63 2 9.24l5.46 4.73L5.82 21 12 17.27 18.18 21l-1.63-7.03L22 9.24zM12 15.4l-3.76 2.27 1-4.28-3.32-2.88 4.38-.38L12 6.1l1.71 4.04 4.38.38-3.32 2.88 1 4.28L12 15.4z"/></svg>
<svg class="ic" style="left:71.5px;top:1009px;width:16px;height:16px;" viewBox="0 0 24 24"><path fill="#959595" d="M3 17.25V21h3.75L17.81 9.94l-3.75-3.75L3 17.25zM5.92 19H5v-.92l9.06-9.06.92.92L5.92 19zM20.71 5.63l-2.34-2.34c-.2-.2-.45-.29-.71-.29s-.51.1-.7.29l-1.83 1.83 3.75 3.75 1.83-1.83c.39-.39.39-1.02 0-1.41z"/></svg>
<svg class="ic" style="left:102.5px;top:1009px;width:16px;height:16px;" viewBox="0 0 24 24"><path fill="#959595" d="M21.99 4c0-1.1-.89-2-1.99-2H4c-1.1 0-2 .9-2 2v12c0 1.1.9 2 2 2h14l4 4-.01-18zM20 4v13.17L18.83 16H4V4h16zM6 12h12v2H6zm0-3h12v2H6zm0-3h12v2H6z"/></svg>
<svg class="ic" style="left:133.5px;top:1009px;width:16px;height:16px;" viewBox="0 0 24 24"><path fill="#959595" d="M12 6c3.79 0 7.17 2.13 8.82 5.5C19.17 14.87 15.79 17 12 17s-7.17-2.13-8.82-5.5C4.83 8.13 8.21 6 12 6m0-2C7 4 2.73 7.11 1 11.5 2.73 15.89 7 19 12 19s9.27-3.11 11-7.5C21.27 7.11 17 4 12 4zm0 5c1.38 0 2.5 1.12 2.5 2.5S13.38 14 12 14s-2.5-1.12-2.5-2.5S10.62 9 12 9m0-2c-2.48 0-4.5 2.02-4.5 4.5S9.52 16 12 16s4.5-2.02 4.5-4.5S14.48 7 12 7z"/></svg>
<svg class="ic" style="left:164.5px;top:1009px;width:16px;height:16px;" viewBox="0 0 24 24"><path fill="#959595" d="M6 19c0 1.1.9 2 2 2h8c1.1 0 2-.9 2-2V7H6v12zM8 9h8v10H8V9zm7.5-5-1-1h-5l-1 1H5v2h14V4z"/></svg>
<div class="t" style="left:196.70px;top:1009.00px;font-size:14.3px;color:#9e9e9e;font-weight:normal;transform:scaleX(0.9900);transform-origin:0 0;">burner min period (<span style="color:#496b8c;text-decoration:underline;text-decoration-color:#2c4459;text-underline-offset:1px">burnminperiod</span>)</div>
<div class="a" style="left:198px;top:425px;width:515px;height:315px;background:#383838;border:1px solid #555;border-radius:7px;box-shadow:0 11px 15px -7px rgba(0,0,0,.15),0 24px 38px 3px rgba(0,0,0,.1),0 9px 46px 8px rgba(0,0,0,.08)"></div>
<div class="t" style="left:222.85px;top:447.00px;font-size:18.5px;color:#f2f2f2;font-weight:normal;transform:scaleX(0.9457);transform-origin:0 0;-webkit-text-stroke:0.35px currentColor;">Edit entity</div>
<div class="a" style="left:199px;top:486px;width:513px;height:1px;background:#525252"></div>
<div class="t" style="left:223.10px;top:505.00px;font-size:13.1px;color:#f5a32e;font-weight:normal;transform:scaleX(1.0234);transform-origin:0 0;-webkit-text-stroke:0.35px currentColor;">entity ID: <span style="color:#f2f2f2">selflowtemp</span></div>
<div class="t" style="left:222.08px;top:524.00px;font-size:13.1px;color:#f5a32e;font-weight:normal;transform:scaleX(1.0224);transform-origin:0 0;-webkit-text-stroke:0.35px currentColor;">Default Entity Name: <span style="color:#f2f2f2">selected flow temperature</span></div>
<div class="t" style="left:223.10px;top:542.00px;font-size:13.1px;color:#f5a32e;font-weight:normal;transform:scaleX(0.9948);transform-origin:0 0;-webkit-text-stroke:0.35px currentColor;">Writeable:</div>
<svg class="ic" style="left:284.9px;top:539.9px;width:16px;height:16px;" viewBox="0 0 24 24"><path fill="#5cb85c" d="M9 16.2 4.8 12l-1.4 1.4L9 19 21 7l-1.4-1.4L9 16.2z"/></svg>
<div class="a" style="left:223px;top:570px;width:156px;height:32px;border:1px solid #555;border-radius:4px"></div>
<div class="a" style="left:254px;top:571px;width:1px;height:30px;background:#555"></div>
<div class="a" style="left:285px;top:571px;width:1px;height:30px;background:#555"></div>
<div class="a" style="left:316px;top:571px;width:1px;height:30px;background:#555"></div>
<div class="a" style="left:347px;top:571px;width:1px;height:30px;background:#555"></div>
<svg class="ic" style="left:230.5px;top:578px;width:16px;height:16px;" viewBox="0 0 24 24"><path fill="#f0f0f0" d="M22 9.24l-7.19-.62L12 2 9.19 8.63 2 9.24l5.46 4.73L5.82 21 12 17.27 18.18 21l-1.63-7.03L22 9.24zM12 15.4l-3.76 2.27 1-4.28-3.32-2.88 4.38-.38L12 6.1l1.71 4.04 4.38.38-3.32 2.88 1 4.28L12 15.4z"/></svg>
<svg class="ic" style="left:261.5px;top:578px;width:16px;height:16px;" viewBox="0 0 24 24"><path fill="#f0f0f0" d="M3 17.25V21h3.75L17.81 9.94l-3.75-3.75L3 17.25zM5.92 19H5v-.92l9.06-9.06.92.92L5.92 19zM20.71 5.63l-2.34-2.34c-.2-.2-.45-.29-.71-.29s-.51.1-.7.29l-1.83 1.83 3.75 3.75 1.83-1.83c.39-.39.39-1.02 0-1.41z"/></svg>
<svg class="ic" style="left:292.5px;top:578px;width:16px;height:16px;" viewBox="0 0 24 24"><path fill="#f0f0f0" d="M21.99 4c0-1.1-.89-2-1.99-2H4c-1.1 0-2 .9-2 2v12c0 1.1.9 2 2 2h14l4 4-.01-18zM20 4v13.17L18.83 16H4V4h16zM6 12h12v2H6zm0-3h12v2H6zm0-3h12v2H6z"/></svg>
<svg class="ic" style="left:323.5px;top:578px;width:16px;height:16px;" viewBox="0 0 24 24"><path fill="#f0f0f0" d="M12 6c3.79 0 7.17 2.13 8.82 5.5C19.17 14.87 15.79 17 12 17s-7.17-2.13-8.82-5.5C4.83 8.13 8.21 6 12 6m0-2C7 4 2.73 7.11 1 11.5 2.73 15.89 7 19 12 19s9.27-3.11 11-7.5C21.27 7.11 17 4 12 4zm0 5c1.38 0 2.5 1.12 2.5 2.5S13.38 14 12 14s-2.5-1.12-2.5-2.5S10.62 9 12 9m0-2c-2.48 0-4.5 2.02-4.5 4.5S9.52 16 12 16s4.5-2.02 4.5-4.5S14.48 7 12 7z"/></svg>
<svg class="ic" style="left:354.5px;top:578px;width:16px;height:16px;" viewBox="0 0 24 24"><path fill="#f0f0f0" d="M6 19c0 1.1.9 2 2 2h8c1.1 0 2-.9 2-2V7H6v12zM8 9h8v10H8V9zm7.5-5-1-1h-5l-1 1H5v2h14V4z"/></svg>
<div class="a" style="left:223px;top:618px;width:250px;height:54px;border:1px solid #7a7a7a;border-radius:4px"></div>
<div class="t" style="left:236.06px;top:635.00px;font-size:16.1px;color:#c8c8c8;font-weight:normal;transform:scaleX(0.9412);transform-origin:0 0;-webkit-text-stroke:0.35px currentColor;">New entity name</div>
<div class="a" style="left:489px;top:618px;width:92px;height:54px;border:1px solid #7a7a7a;border-radius:4px"></div>
<div class="a" style="left:498px;top:616px;width:29.299999999999955px;height:4px;background:#383838"></div>
<div class="t" style="left:502.70px;top:611.00px;font-size:11.5px;color:#d8d8d8;font-weight:normal;transform:scaleX(1.0444);transform-origin:0 0;-webkit-text-stroke:0.2px currentColor;">min</div>
<div class="t" style="left:502.70px;top:637.00px;font-size:15.5px;color:#f2f2f2;font-weight:normal;transform:scaleX(1.0375);transform-origin:0 0;-webkit-text-stroke:0.2px currentColor;">0</div>
<div class="a" style="left:597px;top:618px;width:91px;height:54px;border:1px solid #7a7a7a;border-radius:4px"></div>
<div class="a" style="left:605.8px;top:616px;width:31.200000000000045px;height:4px;background:#383838"></div>
<div class="t" style="left:611.00px;top:611.00px;font-size:11.5px;color:#d8d8d8;font-weight:normal;transform:scaleX(0.9591);transform-origin:0 0;-webkit-text-stroke:0.2px currentColor;">max</div>
<div class="t" style="left:611.00px;top:637.00px;font-size:15.5px;color:#f2f2f2;font-weight:normal;transform:scaleX(0.9588);transform-origin:0 0;-webkit-text-stroke:0.2px currentColor;">90</div>
<div class="a" style="left:199px;top:688px;width:513px;height:1px;background:#525252"></div>
<div class="a" style="left:483px;top:697px;width:107px;height:35px;border:1px solid #2a6aa8;border-radius:4px"></div>
<svg class="ic" style="left:495px;top:705px;width:20px;height:20px;" viewBox="0 0 24 24"><path fill="#2b9cf2" d="M12 2C6.47 2 2 6.47 2 12s4.47 10 10 10 10-4.47 10-10S17.53 2 12 2zm5 13.59L15.59 17 12 13.41 8.41 17 7 15.59 10.59 12 7 8.41 8.41 7 12 10.59 15.59 7 17 8.41 13.41 12 17 15.59z"/></svg>
<div class="t" style="left:523.50px;top:707.00px;font-size:13.1px;color:#3a9ff0;font-weight:normal;transform:scaleX(0.9491);transform-origin:0 0;-webkit-text-stroke:0.35px currentColor;">CANCEL</div>
<div class="a" style="left:598px;top:697px;width:106px;height:35px;border:1px solid #5f88ad;border-radius:4px"></div>
<svg class="ic" style="left:610px;top:705px;width:20px;height:20px;" viewBox="0 0 24 24"><path fill="#90c8f6" d="M9 16.2 4.8 12l-1.4 1.4L9 19 21 7l-1.4-1.4L9 16.2z"/></svg>
<div class="t" style="left:637.63px;top:707.00px;font-size:13.1px;color:#90c8f6;font-weight:normal;transform:scaleX(0.9667);transform-origin:0 0;-webkit-text-stroke:0.35px currentColor;">UPDATE</div>
</body></html>
